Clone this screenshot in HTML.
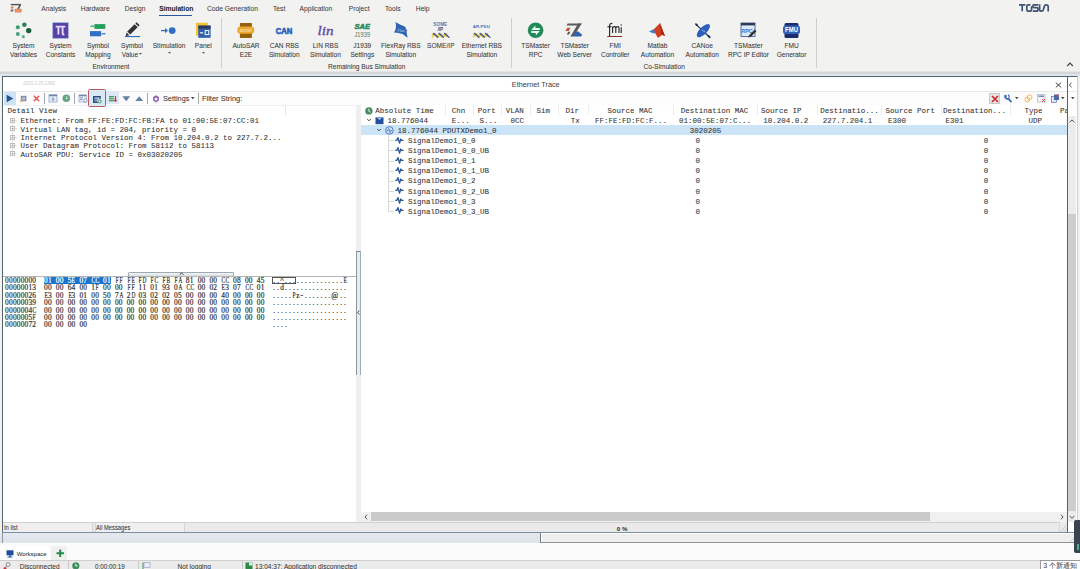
<!DOCTYPE html>
<html><head><meta charset="utf-8">
<style>
*{box-sizing:border-box;margin:0;padding:0}
html,body{width:1080px;height:569px;overflow:hidden;background:#f2f2f1}
body{position:relative;font-family:"Liberation Sans",sans-serif;color:#333}
.a{position:absolute;display:block}
.t{position:absolute;white-space:nowrap}
.s{-webkit-text-stroke:0.04px currentColor}
.m{-webkit-text-stroke:0.06px currentColor}
</style></head><body>

<div class="a" style="left:0px;top:0px;width:1080px;height:71px;background:#f2f2f1;"></div>
<svg class="a" style="left:10px;top:3px" width="12" height="10" viewBox="0 0 12 10"><rect x="0.7" y="0.9" width="10.3" height="1.4" fill="#555"/><path d="M10.4 1.6 L8 6.2" stroke="#555" stroke-width="1.6"/>
<path d="M1.2 3.6 H3.8 L2.9 5.6 H0.6Z" fill="#d8784a"/><path d="M1 6.4 H3.6 L3 8.4 H0.4Z" fill="#666"/>
<rect x="4.8" y="5.8" width="6.8" height="3.8" rx="0.8" fill="#dc8050"/><path d="M6.2 6.6 V8.8 M8 6.6 V8.8 M9.8 6.6 V8.8" stroke="#f8c8a8" stroke-width="0.6"/></svg>
<div class="t s" style="left:41.30px;top:5.63px;font:normal 6.7px/6.7px 'Liberation Sans',sans-serif;color:#3a3a3a;">Analysis</div>
<div class="t s" style="left:80.80px;top:5.63px;font:normal 6.7px/6.7px 'Liberation Sans',sans-serif;color:#3a3a3a;">Hardware</div>
<div class="t s" style="left:124.70px;top:5.63px;font:normal 6.7px/6.7px 'Liberation Sans',sans-serif;color:#3a3a3a;">Design</div>
<div class="t s" style="left:207.00px;top:5.63px;font:normal 6.7px/6.7px 'Liberation Sans',sans-serif;color:#3a3a3a;">Code Generation</div>
<div class="t s" style="left:273.00px;top:5.63px;font:normal 6.7px/6.7px 'Liberation Sans',sans-serif;color:#3a3a3a;">Test</div>
<div class="t s" style="left:299.50px;top:5.63px;font:normal 6.7px/6.7px 'Liberation Sans',sans-serif;color:#3a3a3a;">Application</div>
<div class="t s" style="left:348.70px;top:5.63px;font:normal 6.7px/6.7px 'Liberation Sans',sans-serif;color:#3a3a3a;">Project</div>
<div class="t s" style="left:385.00px;top:5.63px;font:normal 6.7px/6.7px 'Liberation Sans',sans-serif;color:#3a3a3a;">Tools</div>
<div class="t s" style="left:415.80px;top:5.63px;font:normal 6.7px/6.7px 'Liberation Sans',sans-serif;color:#3a3a3a;">Help</div>
<div class="t s" style="left:159.20px;top:5.63px;font:bold 6.7px/6.7px 'Liberation Sans',sans-serif;color:#222;">Simulation</div>
<div class="a" style="left:159px;top:14.5px;width:33px;height:1.6px;background:#2b579a;"></div>
<svg class="a" style="left:1018px;top:3px" width="33" height="9" viewBox="0 0 33 9"><g stroke="#3e5274" stroke-width="1.7" fill="none" stroke-linejoin="round">
<path d="M1 1.8 H7.4 M4.2 1.8 V8.2"/>
<path d="M12.4 1.8 H10.4 Q8.8 1.8 8.8 3.4 V6.6 Q8.8 8.2 10.4 8.2 H12 Q13.6 8.2 13.6 6.6 V3.2"/>
<path d="M20.2 1.8 H16 Q14.8 1.8 14.8 3.2 Q14.8 4.6 16 4.6 H18.8 Q20.2 4.6 20.2 6.2 Q20.2 8.2 18.6 8.2 H14.8"/>
<path d="M21.6 1.2 V6.4 Q21.6 8.2 23.4 8.2 Q25.4 8.2 25.6 6 L26.4 3 Q26.8 1.8 28 1.8 Q30.2 1.8 30.2 3.6 V8.6"/>
</g></svg>
<svg class="a" style="left:1066px;top:62px" width="8" height="5" viewBox="0 0 8 5"><path d="M1.2 4 L4 1.2 L6.8 4" stroke="#444" stroke-width="1.2" fill="none"/></svg>
<div class="a" style="left:221.2px;top:18px;width:1px;height:50px;background:#cfcfcf;"></div>
<div class="a" style="left:510.6px;top:18px;width:1px;height:50px;background:#cfcfcf;"></div>
<div class="a" style="left:816.2px;top:18px;width:1px;height:50px;background:#cfcfcf;"></div>
<div class="t s" style="left:-76.50px;width:200px;text-align:center;top:43.31px;font:normal 6.6px/6.6px 'Liberation Sans',sans-serif;color:#333;">System</div>
<div class="t s" style="left:-76.50px;width:200px;text-align:center;top:51.51px;font:normal 6.6px/6.6px 'Liberation Sans',sans-serif;color:#333;">Variables</div>
<div class="t s" style="left:-39.50px;width:200px;text-align:center;top:43.31px;font:normal 6.6px/6.6px 'Liberation Sans',sans-serif;color:#333;">System</div>
<div class="t s" style="left:-39.50px;width:200px;text-align:center;top:51.51px;font:normal 6.6px/6.6px 'Liberation Sans',sans-serif;color:#333;">Constants</div>
<div class="t s" style="left:-2.00px;width:200px;text-align:center;top:43.31px;font:normal 6.6px/6.6px 'Liberation Sans',sans-serif;color:#333;">Symbol</div>
<div class="t s" style="left:-2.00px;width:200px;text-align:center;top:51.51px;font:normal 6.6px/6.6px 'Liberation Sans',sans-serif;color:#333;">Mapping</div>
<div class="t s" style="left:32.00px;width:200px;text-align:center;top:43.31px;font:normal 6.6px/6.6px 'Liberation Sans',sans-serif;color:#333;">Symbol</div>
<div class="t s" style="left:30.00px;width:200px;text-align:center;top:51.51px;font:normal 6.6px/6.6px 'Liberation Sans',sans-serif;color:#333;">Value</div>
<svg class="a" style="left:139.2px;top:53.3px" width="3" height="2" viewBox="0 0 3 2"><path d="M0 0 H3 L1.5 1.8Z" fill="#555"/></svg>
<div class="t s" style="left:69.00px;width:200px;text-align:center;top:43.31px;font:normal 6.6px/6.6px 'Liberation Sans',sans-serif;color:#333;">Stimulation</div>
<svg class="a" style="left:167.5px;top:52.3px" width="3" height="2" viewBox="0 0 3 2"><path d="M0 0 H3 L1.5 1.8Z" fill="#555"/></svg>
<div class="t s" style="left:103.30px;width:200px;text-align:center;top:43.31px;font:normal 6.6px/6.6px 'Liberation Sans',sans-serif;color:#333;">Panel</div>
<svg class="a" style="left:201.8px;top:52.3px" width="3" height="2" viewBox="0 0 3 2"><path d="M0 0 H3 L1.5 1.8Z" fill="#555"/></svg>
<div class="t s" style="left:146.00px;width:200px;text-align:center;top:43.31px;font:normal 6.6px/6.6px 'Liberation Sans',sans-serif;color:#333;">AutoSAR</div>
<div class="t s" style="left:146.00px;width:200px;text-align:center;top:51.51px;font:normal 6.6px/6.6px 'Liberation Sans',sans-serif;color:#333;">E2E</div>
<div class="t s" style="left:184.30px;width:200px;text-align:center;top:43.31px;font:normal 6.6px/6.6px 'Liberation Sans',sans-serif;color:#333;">CAN RBS</div>
<div class="t s" style="left:184.30px;width:200px;text-align:center;top:51.51px;font:normal 6.6px/6.6px 'Liberation Sans',sans-serif;color:#333;">Simulation</div>
<div class="t s" style="left:225.50px;width:200px;text-align:center;top:43.31px;font:normal 6.6px/6.6px 'Liberation Sans',sans-serif;color:#333;">LIN RBS</div>
<div class="t s" style="left:225.50px;width:200px;text-align:center;top:51.51px;font:normal 6.6px/6.6px 'Liberation Sans',sans-serif;color:#333;">Simulation</div>
<div class="t s" style="left:262.30px;width:200px;text-align:center;top:43.31px;font:normal 6.6px/6.6px 'Liberation Sans',sans-serif;color:#333;">J1939</div>
<div class="t s" style="left:262.30px;width:200px;text-align:center;top:51.51px;font:normal 6.6px/6.6px 'Liberation Sans',sans-serif;color:#333;">Settings</div>
<div class="t s" style="left:300.80px;width:200px;text-align:center;top:43.31px;font:normal 6.6px/6.6px 'Liberation Sans',sans-serif;color:#333;">FlexRay RBS</div>
<div class="t s" style="left:300.80px;width:200px;text-align:center;top:51.51px;font:normal 6.6px/6.6px 'Liberation Sans',sans-serif;color:#333;">Simulation</div>
<div class="t s" style="left:340.80px;width:200px;text-align:center;top:43.31px;font:normal 6.6px/6.6px 'Liberation Sans',sans-serif;color:#333;">SOME/IP</div>
<div class="t s" style="left:381.80px;width:200px;text-align:center;top:43.31px;font:normal 6.6px/6.6px 'Liberation Sans',sans-serif;color:#333;">Ethernet RBS</div>
<div class="t s" style="left:381.80px;width:200px;text-align:center;top:51.51px;font:normal 6.6px/6.6px 'Liberation Sans',sans-serif;color:#333;">Simulation</div>
<div class="t s" style="left:435.60px;width:200px;text-align:center;top:43.31px;font:normal 6.6px/6.6px 'Liberation Sans',sans-serif;color:#333;">TSMaster</div>
<div class="t s" style="left:435.60px;width:200px;text-align:center;top:51.51px;font:normal 6.6px/6.6px 'Liberation Sans',sans-serif;color:#333;">RPC</div>
<div class="t s" style="left:474.70px;width:200px;text-align:center;top:43.31px;font:normal 6.6px/6.6px 'Liberation Sans',sans-serif;color:#333;">TSMaster</div>
<div class="t s" style="left:474.70px;width:200px;text-align:center;top:51.51px;font:normal 6.6px/6.6px 'Liberation Sans',sans-serif;color:#333;">Web Server</div>
<div class="t s" style="left:515.20px;width:200px;text-align:center;top:43.31px;font:normal 6.6px/6.6px 'Liberation Sans',sans-serif;color:#333;">FMI</div>
<div class="t s" style="left:515.20px;width:200px;text-align:center;top:51.51px;font:normal 6.6px/6.6px 'Liberation Sans',sans-serif;color:#333;">Controller</div>
<div class="t s" style="left:557.50px;width:200px;text-align:center;top:43.31px;font:normal 6.6px/6.6px 'Liberation Sans',sans-serif;color:#333;">Matlab</div>
<div class="t s" style="left:557.50px;width:200px;text-align:center;top:51.51px;font:normal 6.6px/6.6px 'Liberation Sans',sans-serif;color:#333;">Automation</div>
<div class="t s" style="left:602.20px;width:200px;text-align:center;top:43.31px;font:normal 6.6px/6.6px 'Liberation Sans',sans-serif;color:#333;">CANoe</div>
<div class="t s" style="left:602.20px;width:200px;text-align:center;top:51.51px;font:normal 6.6px/6.6px 'Liberation Sans',sans-serif;color:#333;">Automation</div>
<div class="t s" style="left:648.40px;width:200px;text-align:center;top:43.31px;font:normal 6.6px/6.6px 'Liberation Sans',sans-serif;color:#333;">TSMaster</div>
<div class="t s" style="left:648.40px;width:200px;text-align:center;top:51.51px;font:normal 6.6px/6.6px 'Liberation Sans',sans-serif;color:#333;">RPC IP Editor</div>
<div class="t s" style="left:691.60px;width:200px;text-align:center;top:43.31px;font:normal 6.6px/6.6px 'Liberation Sans',sans-serif;color:#333;">FMU</div>
<div class="t s" style="left:691.60px;width:200px;text-align:center;top:51.51px;font:normal 6.6px/6.6px 'Liberation Sans',sans-serif;color:#333;">Generator</div>
<div class="t s" style="left:10.90px;width:200px;text-align:center;top:63.91px;font:normal 6.6px/6.6px 'Liberation Sans',sans-serif;color:#333;">Environment</div>
<div class="t s" style="left:266.70px;width:200px;text-align:center;top:63.91px;font:normal 6.6px/6.6px 'Liberation Sans',sans-serif;color:#333;">Remaining Bus Simulation</div>
<div class="t s" style="left:564.20px;width:200px;text-align:center;top:63.91px;font:normal 6.6px/6.6px 'Liberation Sans',sans-serif;color:#333;">Co-Simulation</div>
<svg class="a" style="left:14px;top:21px" width="18" height="18" viewBox="0 0 18 18"><circle cx="3.8" cy="6.2" r="2" fill="#3a9a6a"/><circle cx="10.4" cy="3.8" r="2.3" fill="#2a8458"/>
<circle cx="14.7" cy="9.6" r="2.7" fill="#1b5e3c"/><circle cx="3.8" cy="12.9" r="2" fill="#4aa67a"/><circle cx="9.3" cy="15.7" r="1.6" fill="#5ab488"/></svg>
<svg class="a" style="left:52px;top:22px" width="17" height="17" viewBox="0 0 17 17"><rect x="1" y="1" width="15" height="15" fill="#5a3fa6" stroke="#3f5db8" stroke-width="0.8"/>
<path d="M3.6 4.6 H13.4 M6.4 4.6 V12.6 M10.6 4.6 V11.4 Q10.6 12.8 12.4 12.4" stroke="#e4dcf6" stroke-width="1.9" fill="none"/></svg>
<svg class="a" style="left:89px;top:23px" width="18" height="15" viewBox="0 0 18 15"><rect x="5.4" y="1.1" width="10.9" height="4.8" fill="#22a05a"/><rect x="1.5" y="2.6" width="3.5" height="1.2" fill="#22a05a"/>
<rect x="1" y="8.1" width="11.1" height="5.2" fill="#2f6fc6"/><rect x="12.5" y="10.2" width="4" height="1.2" fill="#2f6fc6"/></svg>
<svg class="a" style="left:124px;top:21px" width="17" height="17" viewBox="0 0 17 17"><path d="M3.2 10.6 L10.6 3.2 L13.6 6.2 L6.2 13.6 Z" fill="#333"/><path d="M11.4 2.4 L12.6 1.2 L15.6 4.2 L14.4 5.4Z" fill="#333"/>
<path d="M2.6 11.4 L5.4 14.2 L1.6 15.2Z" fill="#333"/><rect x="1" y="15" width="15" height="1.1" fill="#2f6fc6"/></svg>
<svg class="a" style="left:160px;top:25px" width="18" height="11" viewBox="0 0 18 11"><path d="M1 5.6 H6.5" stroke="#2f6fc6" stroke-width="1.3"/><path d="M5 3 L8 5.6 L5 8.2Z" fill="#2f6fc6"/><circle cx="12.2" cy="5.6" r="3.4" fill="#2f6fc6"/></svg>
<svg class="a" style="left:195px;top:22px" width="17" height="17" viewBox="0 0 17 17"><rect x="1" y="0.8" width="11.8" height="12.8" fill="#f2c230"/><rect x="3.3" y="3.6" width="12.3" height="12.2" fill="#2f5fb0"/>
<rect x="3.3" y="3.6" width="12.3" height="3" fill="#2c3a58"/><rect x="5" y="10.3" width="3.2" height="1.1" fill="#fff"/><rect x="10.2" y="8.6" width="3.6" height="4" fill="none" stroke="#fff" stroke-width="1"/></svg>
<svg class="a" style="left:236px;top:22px" width="19" height="17" viewBox="0 0 19 17"><rect x="3.9" y="1" width="12" height="15" rx="0.8" fill="#94600a"/><rect x="1.3" y="4.4" width="16.9" height="7.4" rx="3" fill="#eca82c"/>
<text x="9.7" y="9.8" text-anchor="middle" font-family="Liberation Sans" font-weight="bold" font-size="5" fill="#f8dca0" textLength="12" lengthAdjust="spacingAndGlyphs">arxml</text></svg>
<svg class="a" style="left:274px;top:26px" width="20" height="9" viewBox="0 0 20 9"><text x="10" y="7.8" text-anchor="middle" font-family="Liberation Sans" font-weight="bold" font-size="9" fill="#2a64c0" stroke="#2a64c0" stroke-width="0.7" textLength="16.6" lengthAdjust="spacingAndGlyphs">CAN</text></svg>
<svg class="a" style="left:316px;top:24px" width="19" height="13" viewBox="0 0 19 13"><text x="9.5" y="10.5" text-anchor="middle" font-family="Liberation Serif" font-style="italic" font-size="12" fill="#5a4aa8" stroke="#5a4aa8" stroke-width="0.3" textLength="16" lengthAdjust="spacingAndGlyphs">lin</text></svg>
<svg class="a" style="left:353px;top:23px" width="19" height="15" viewBox="0 0 19 15"><text x="9.3" y="6.4" text-anchor="middle" font-family="Liberation Sans" font-style="italic" font-weight="bold" font-size="7" fill="#2a8858" stroke="#2a8858" stroke-width="0.5" textLength="15.4" lengthAdjust="spacingAndGlyphs">SAE</text>
<text x="9.3" y="13.6" text-anchor="middle" font-family="Liberation Sans" font-size="6.4" fill="#5a7868" textLength="15.6" lengthAdjust="spacingAndGlyphs">J1939</text></svg>
<svg class="a" style="left:393px;top:21px" width="16" height="18" viewBox="0 0 16 18"><path d="M2.5 1 C6 3 9 4.5 12.5 6 L13 8.5 L14.5 9 L13.5 10.5 L14.6 16.8 L9.5 13 C7 12 4 12 1 11.5 C3 9 3.5 5 2.5 1Z" fill="#2f66b4"/>
<text x="8" y="10.5" text-anchor="middle" font-family="Liberation Serif" font-style="italic" font-size="4" fill="#cde">Flex</text></svg>
<svg class="a" style="left:430px;top:21px" width="21" height="18" viewBox="0 0 21 18"><text x="10.3" y="5.2" text-anchor="middle" font-family="Liberation Sans" font-weight="bold" font-size="4.8" fill="#5a78b0" textLength="14" lengthAdjust="spacingAndGlyphs">SOME</text>
<text x="10.3" y="9.6" text-anchor="middle" font-family="Liberation Sans" font-weight="bold" font-size="4.6" fill="#3a4a70">/IP</text>
<g transform="translate(0.5,11.2)"><path d="M1.5 2.6 Q4 1 6.5 4.4 Q9 1 11.5 4.4 Q14 1 16.5 4.4" stroke="#e8c848" stroke-width="2" fill="none"/><path d="M1.5 5 Q3.5 2.5 5.5 1.2 M7 5 Q9 2.5 11 1.2 M12.5 5 Q14.5 2.5 16.5 1.2" stroke="#e8c848" stroke-width="1.6" fill="none"/><path d="M3 1.2 Q5 2.6 7.5 5.2 M8.5 1.2 Q10.5 2.6 13 5.2 M14 1.2 Q16 2.6 18.5 5.2" stroke="#3a5a94" stroke-width="1.3" fill="none" stroke-linecap="round"/></g></svg>
<svg class="a" style="left:471px;top:23px" width="21" height="16" viewBox="0 0 21 16"><text x="10.3" y="5" text-anchor="middle" font-family="Liberation Sans" font-weight="bold" font-size="4.2" fill="#5070b0" textLength="17" lengthAdjust="spacingAndGlyphs">AR-PDU</text>
<g transform="translate(0.5,9.2)"><path d="M1.5 2.6 Q4 1 6.5 4.4 Q9 1 11.5 4.4 Q14 1 16.5 4.4" stroke="#e8c848" stroke-width="2" fill="none"/><path d="M1.5 5 Q3.5 2.5 5.5 1.2 M7 5 Q9 2.5 11 1.2 M12.5 5 Q14.5 2.5 16.5 1.2" stroke="#e8c848" stroke-width="1.6" fill="none"/><path d="M3 1.2 Q5 2.6 7.5 5.2 M8.5 1.2 Q10.5 2.6 13 5.2 M14 1.2 Q16 2.6 18.5 5.2" stroke="#3a5a94" stroke-width="1.3" fill="none" stroke-linecap="round"/></g></svg>
<svg class="a" style="left:527px;top:22px" width="17" height="17" viewBox="0 0 17 17"><circle cx="8.6" cy="8.3" r="7.8" fill="#218a58"/><path d="M4.2 8 L8.4 3.4 V6 H12.8 V8Z" fill="#e4fbef"/><path d="M12.8 9.1 L8.8 13.4 V10.9 H4.2 V9.1Z" fill="#e4fbef"/></svg>
<svg class="a" style="left:565px;top:23px" width="19" height="14" viewBox="0 0 19 14"><path d="M2.6 0.4 H16.6 L15.6 2.6 H1.6Z" fill="#5a5a5a"/><path d="M13.2 0.4 H16.6 L8.8 13.4 H5.4Z" fill="#5a5a5a"/>
<path d="M2.4 4.8 H5.6 L3.6 8 H0.4Z" fill="#c85030"/><path d="M3.2 8.8 H5.4 L4 11.4 H1.8Z" fill="#555"/>
<path d="M9.6 13.4 C8 13.4 7.8 10.8 10 10.6 C10.4 8 14.2 7.8 15 10.2 C17.4 10.2 17.6 13.4 15.4 13.4Z" fill="#2f62b0"/></svg>
<svg class="a" style="left:606px;top:22px" width="17" height="16" viewBox="0 0 17 16"><g stroke="#222" fill="none" stroke-width="1.1"><path d="M3.6 14 V3.6 Q3.6 1.2 6.4 1.2"/><path d="M1.4 4.8 H5.4"/>
<path d="M6.6 4.4 V11 M6.6 6 Q6.8 4.6 8.4 4.6 Q9.8 4.6 9.8 6 V11 M9.8 6 Q10 4.6 11.6 4.6 Q13 4.6 13 6 V11"/><path d="M15.2 5.2 V11"/></g>
<rect x="14.6" y="2.4" width="1.2" height="1.2" fill="#222"/><rect x="1.2" y="14" width="15" height="1" fill="#8a3030"/></svg>
<svg class="a" style="left:648px;top:22px" width="18" height="17" viewBox="0 0 18 17"><path d="M1 9.5 L6 7 L9 10 L5.5 11.5Z" fill="#3a7fd0"/><path d="M6 7 L12 1 L17 14 L14 13 L10 16 L7 11Z" fill="#d04020"/><path d="M12 1 L14.5 8 L17 14 L13 12Z" fill="#a82810"/></svg>
<svg class="a" style="left:693px;top:21px" width="19" height="18" viewBox="0 0 19 18"><path d="M3 3.4 L16.4 16" stroke="#1e2c52" stroke-width="1.1"/><ellipse cx="3.6" cy="3.8" rx="1.9" ry="1" transform="rotate(43 3.6 3.8)" fill="#1e2c52"/><ellipse cx="16" cy="15.6" rx="1.9" ry="1" transform="rotate(43 16 15.6)" fill="#1e2c52"/>
<ellipse cx="10.4" cy="9.6" rx="8.6" ry="3.6" transform="rotate(-45 10.4 9.6)" fill="#2c60bc"/>
<path d="M9.2 9.6 L10.2 8.6 M10.6 11 L11.6 10" stroke="#8ab8f0" stroke-width="1.1"/></svg>
<svg class="a" style="left:740px;top:22px" width="17" height="16" viewBox="0 0 17 16"><rect x="1" y="1" width="14" height="13.5" fill="#dbe8f8" stroke="#3a5080" stroke-width="0.8"/><rect x="1" y="1" width="14" height="2.4" fill="#2c3a58"/>
<text x="7" y="11" text-anchor="middle" font-family="Liberation Sans" font-weight="bold" font-size="5.5" fill="#4070c0">RPC</text><path d="M9.6 14.4 L15.6 8.4" stroke="#333" stroke-width="2.4"/><path d="M8.6 15.6 L9.8 14.2" stroke="#333" stroke-width="1"/></svg>
<svg class="a" style="left:782px;top:22px" width="19" height="17" viewBox="0 0 19 17"><rect x="2.5" y="1" width="14" height="15" rx="1.5" fill="#1a2e6a"/><rect x="1" y="3.5" width="17" height="8.5" rx="2.5" fill="#2f62b8"/>
<text x="9.5" y="10.4" text-anchor="middle" font-family="Liberation Sans" font-weight="bold" font-size="7" fill="#fff" textLength="13" lengthAdjust="spacingAndGlyphs">FMU</text></svg>
<div class="a" style="left:0px;top:70.5px;width:1080px;height:1px;background:#e6e5e5;"></div>
<div class="a" style="left:0px;top:71.5px;width:1080px;height:2px;background:#d6d6d6;"></div>
<div class="a" style="left:0px;top:73.5px;width:1080px;height:2.5px;background:#dde5ef;"></div>
<div class="a" style="left:2px;top:76px;width:1076px;height:457px;background:#fff;border:1px solid #55636f;border-right:1px solid #c4d0dc;border-bottom:1px solid #7d8ea4"></div>
<div class="a" style="left:3px;top:77px;width:1074px;height:14px;background:#fff;"></div>
<div class="a" style="left:3px;top:91px;width:1074px;height:0.8px;background:#e8e8e8;"></div>
<div class="t s" style="left:23.00px;top:82.11px;font:normal 4.6px/4.6px 'Liberation Sans',sans-serif;color:#cfcfcf;">2025.3.25.1360</div>
<div class="t s" style="left:511.80px;top:81.12px;font:normal 7.3px/7.3px 'Liberation Sans',sans-serif;color:#444;">Ethernet Trace</div>
<svg class="a" style="left:1055px;top:82px" width="7" height="6" viewBox="0 0 7 6"><path d="M0.8 0.6 L6.2 5.4 M6.2 0.6 L0.8 5.4" stroke="#444" stroke-width="1"/></svg>
<div class="a" style="left:3px;top:92px;width:1064px;height:13px;background:#fcfcfc;"></div>
<div class="a" style="left:3.7px;top:91.7px;width:12px;height:13px;background:#cde2f5;"></div>
<svg class="a" style="left:6px;top:94px" width="8" height="9" viewBox="0 0 8 9"><path d="M0.7 0.8 L7.3 4.4 L0.7 8.2Z" fill="#24528e"/></svg>
<svg class="a" style="left:20px;top:95px" width="7" height="7" viewBox="0 0 7 7"><rect x="0.8" y="0.8" width="5.6" height="5.4" fill="#8090ac"/><rect x="2.2" y="2.2" width="2.8" height="2.6" fill="#b8c4d4"/><rect x="0" y="5.4" width="2.6" height="1.6" fill="#eab070"/></svg>
<svg class="a" style="left:33px;top:95px" width="7" height="7" viewBox="0 0 7 7"><path d="M0.9 0.9 L6.1 6.1 M6.1 0.9 L0.9 6.1" stroke="#e06060" stroke-width="1.5"/></svg>
<div class="a" style="left:44.3px;top:93px;width:0.9px;height:11px;background:#a8a8a8;"></div>
<svg class="a" style="left:48px;top:94px" width="10" height="9" viewBox="0 0 10 9"><rect x="1" y="1" width="8" height="7" fill="#e8eef8" stroke="#90a4c8" stroke-width="0.8"/><rect x="1" y="0.6" width="8" height="1.6" fill="#6a82b0"/><path d="M5 3 V6.4 M3.5 5 L5 6.4 L6.5 5" stroke="#6a82b0" stroke-width="0.8" fill="none"/></svg>
<svg class="a" style="left:62px;top:94px" width="9" height="9" viewBox="0 0 9 9"><circle cx="4.3" cy="4.3" r="3.8" fill="#6aa383"/><path d="M4.3 2.2 V4.6 H6" stroke="#e8f4ec" stroke-width="0.8" fill="none"/></svg>
<div class="a" style="left:74.2px;top:93px;width:0.9px;height:11px;background:#a8a8a8;"></div>
<svg class="a" style="left:78px;top:94px" width="10" height="9" viewBox="0 0 10 9"><rect x="1" y="1" width="7.4" height="7" fill="#eef2f8" stroke="#98a8c8" stroke-width="0.8"/><rect x="1" y="0.8" width="7.4" height="1.5" fill="#7088b0"/><rect x="2" y="3.4" width="3" height="0.9" fill="#7088b0"/><rect x="2" y="5.2" width="2.5" height="0.9" fill="#7088b0"/><circle cx="7.4" cy="6.4" r="1.7" fill="#fff" stroke="#7088b0" stroke-width="0.8"/></svg>
<div class="a" style="left:106.4px;top:91.3px;width:13px;height:13px;background:#dce9f4;"></div>
<svg class="a" style="left:108px;top:95px" width="10" height="8" viewBox="0 0 10 8"><rect x="1" y="1" width="4.8" height="1.3" fill="#4a9660"/><rect x="1" y="3" width="4.8" height="1.3" fill="#4a9660"/><rect x="1" y="5" width="4.8" height="1.3" fill="#4a9660"/><rect x="6.8" y="1" width="1.3" height="4.5" fill="#a84858"/><circle cx="7.45" cy="5.6" r="1.2" fill="#b02840"/></svg>
<svg class="a" style="left:122px;top:95.5px" width="8.5" height="5.5" viewBox="0 0 8.5 5.5"><path d="M0.3 0.3 H8.2 L4.25 5.3Z" fill="#6480a6"/></svg>
<svg class="a" style="left:135.3px;top:96px" width="8.5" height="5.3" viewBox="0 0 8.5 5.3"><path d="M0.3 5 H8.2 L4.25 0.2Z" fill="#6480a6"/></svg>
<div class="a" style="left:147.3px;top:93px;width:0.9px;height:11px;background:#a8a8a8;"></div>
<svg class="a" style="left:152px;top:94.5px" width="8" height="8" viewBox="0 0 8 8"><path d="M4 0.3 L6.9 2 V5.6 L4 7.4 L1.1 5.6 V2Z" fill="#9060a8"/><circle cx="4" cy="3.9" r="1.5" fill="#f0e8f4"/></svg>
<div class="t s" style="left:163.00px;top:94.62px;font:normal 7.3px/7.3px 'Liberation Sans',sans-serif;color:#333;">Settings</div>
<svg class="a" style="left:190.5px;top:97px" width="4" height="3" viewBox="0 0 4 3"><path d="M0 0 H3.5 L1.75 2.2Z" fill="#444"/></svg>
<div class="a" style="left:197.8px;top:93px;width:0.9px;height:11px;background:#a8a8a8;"></div>
<div class="t s" style="left:201.90px;top:95.05px;font:normal 7.5px/7.5px 'Liberation Sans',sans-serif;color:#333;">Filter String:</div>
<div class="a" style="left:989px;top:93px;width:10.6px;height:10.5px;background:#e8e8e8;border:0.8px solid #c8c8c8"></div>
<svg class="a" style="left:990.5px;top:94.5px" width="8" height="8" viewBox="0 0 8 8"><path d="M1 1 L7 7 M7 1 L1 7" stroke="#d02828" stroke-width="1.7"/></svg>
<svg class="a" style="left:1004px;top:94px" width="8" height="9" viewBox="0 0 8 9"><path d="M1.2 1.6 A2.4 2.4 0 0 0 4.4 4.6 L7 7.6" stroke="#3a68b8" stroke-width="1.7" fill="none" stroke-linecap="round"/><path d="M1.4 1.2 L2.6 2.6 M3.8 0.8 A2.2 2.2 0 0 1 5 3.8" stroke="#3a68b8" stroke-width="1.2" fill="none"/></svg>
<svg class="a" style="left:1014.5px;top:97px" width="4" height="3" viewBox="0 0 4 3"><path d="M0 0 H3.5 L1.75 2.2Z" fill="#444"/></svg>
<svg class="a" style="left:1023.5px;top:94px" width="9" height="9" viewBox="0 0 9 9"><circle cx="3.2" cy="5.5" r="2.4" fill="none" stroke="#f0b860" stroke-width="1"/><circle cx="5.6" cy="3.2" r="2.4" fill="none" stroke="#f0b860" stroke-width="1"/></svg>
<svg class="a" style="left:1037px;top:94px" width="9" height="9" viewBox="0 0 9 9"><rect x="0.5" y="0.5" width="7.5" height="7.5" fill="#f4f6fa" stroke="#aab4c8" stroke-width="0.7"/><rect x="1.5" y="1.5" width="5.5" height="1.4" fill="#6b7fa8"/><path d="M5 5 L8 8 M8 5 L5 8" stroke="#e04040" stroke-width="0.9"/></svg>
<svg class="a" style="left:1050.5px;top:94px" width="9" height="9" viewBox="0 0 9 9"><rect x="0.5" y="2.5" width="5" height="6" fill="#dde6f4" stroke="#5a72a8" stroke-width="0.7"/><rect x="3" y="0.5" width="5" height="5.5" fill="#4a66a8"/><rect x="6" y="0.5" width="2" height="2" fill="#e05050"/></svg>
<svg class="a" style="left:1061px;top:97px" width="4" height="3" viewBox="0 0 4 3"><path d="M0 0 H3.5 L1.75 2.2Z" fill="#444"/></svg>
<div class="a" style="left:3px;top:105px;width:354px;height:417px;background:#fff;"></div>
<div class="a" style="left:3px;top:104.6px;width:1064px;height:0.8px;background:#f0f0f0;"></div>
<div class="a" style="left:285.4px;top:105px;width:0.8px;height:10.6px;background:#e6e6e6;"></div>
<div class="t m" style="left:7.60px;top:108.45px;font:normal 7.5px/7.5px 'Liberation Mono',monospace;color:#333;">Detail View</div>
<div class="a" style="left:12.2px;top:121px;width:0.8px;height:33px;background:#e2e2e2;"></div>
<svg class="a" style="left:10px;top:117.9px" width="7" height="6" viewBox="0 0 7 6"><rect x="0.5" y="0.5" width="4.2" height="4.2" fill="#fff" stroke="#aaa" stroke-width="0.7"/><path d="M1.4 2.6 H3.8 M2.6 1.4 V3.8" stroke="#888" stroke-width="0.6"/><path d="M4.8 2.6 H6.8" stroke="#bbb" stroke-width="0.6"/></svg>
<div class="t m" style="left:20.50px;top:118.35px;font:normal 7.5px/7.5px 'Liberation Mono',monospace;color:#333;">Ethernet: From FF:FE:FD:FC:FB:FA to 01:00:5E:07:CC:01</div>
<svg class="a" style="left:10px;top:126.25px" width="7" height="6" viewBox="0 0 7 6"><rect x="0.5" y="0.5" width="4.2" height="4.2" fill="#fff" stroke="#aaa" stroke-width="0.7"/><path d="M1.4 2.6 H3.8 M2.6 1.4 V3.8" stroke="#888" stroke-width="0.6"/><path d="M4.8 2.6 H6.8" stroke="#bbb" stroke-width="0.6"/></svg>
<div class="t m" style="left:20.50px;top:126.70px;font:normal 7.5px/7.5px 'Liberation Mono',monospace;color:#333;">Virtual LAN tag, id = 204, priority = 0</div>
<svg class="a" style="left:10px;top:134.6px" width="7" height="6" viewBox="0 0 7 6"><rect x="0.5" y="0.5" width="4.2" height="4.2" fill="#fff" stroke="#aaa" stroke-width="0.7"/><path d="M1.4 2.6 H3.8 M2.6 1.4 V3.8" stroke="#888" stroke-width="0.6"/><path d="M4.8 2.6 H6.8" stroke="#bbb" stroke-width="0.6"/></svg>
<div class="t m" style="left:20.50px;top:135.05px;font:normal 7.5px/7.5px 'Liberation Mono',monospace;color:#333;">Internet Protocol Version 4: From 10.204.0.2 to 227.7.2...</div>
<svg class="a" style="left:10px;top:142.95000000000002px" width="7" height="6" viewBox="0 0 7 6"><rect x="0.5" y="0.5" width="4.2" height="4.2" fill="#fff" stroke="#aaa" stroke-width="0.7"/><path d="M1.4 2.6 H3.8 M2.6 1.4 V3.8" stroke="#888" stroke-width="0.6"/><path d="M4.8 2.6 H6.8" stroke="#bbb" stroke-width="0.6"/></svg>
<div class="t m" style="left:20.50px;top:143.40px;font:normal 7.5px/7.5px 'Liberation Mono',monospace;color:#333;">User Datagram Protocol: From 58112 to 58113</div>
<svg class="a" style="left:10px;top:151.3px" width="7" height="6" viewBox="0 0 7 6"><rect x="0.5" y="0.5" width="4.2" height="4.2" fill="#fff" stroke="#aaa" stroke-width="0.7"/><path d="M1.4 2.6 H3.8 M2.6 1.4 V3.8" stroke="#888" stroke-width="0.6"/><path d="M4.8 2.6 H6.8" stroke="#bbb" stroke-width="0.6"/></svg>
<div class="t m" style="left:20.50px;top:151.75px;font:normal 7.5px/7.5px 'Liberation Mono',monospace;color:#333;">AutoSAR PDU: Service ID = 0x03020205</div>
<div class="a" style="left:3px;top:276px;width:354px;height:1px;background:#b4b4b4;"></div>
<div class="a" style="left:128.2px;top:272px;width:105.7px;height:4.2px;background:linear-gradient(#f4f6f8,#d4dde2);border:0.7px solid #a0a8b0;border-bottom:none;border-radius:1.5px 1.5px 0 0"></div>
<svg class="a" style="left:179px;top:272.4px" width="5" height="3.4" viewBox="0 0 5 3.4"><path d="M0.6 2.8 L2.5 0.9 L4.4 2.8" stroke="#333" stroke-width="1" fill="none"/></svg>
<div class="a" style="left:43.9px;top:277.2px;width:67.2px;height:6.8px;background:#1a74d0;"></div>
<div class="t" style="left:5.00px;top:277.10px;font:normal 7.4px/7.4px 'Liberation Serif',serif;color:#333;-webkit-text-stroke:0.2px #333"><span style="display:inline-block;width:3.9px;text-align:center">0</span><span style="display:inline-block;width:3.9px;text-align:center">0</span><span style="display:inline-block;width:3.9px;text-align:center">0</span><span style="display:inline-block;width:3.9px;text-align:center">0</span><span style="display:inline-block;width:3.9px;text-align:center">0</span><span style="display:inline-block;width:3.9px;text-align:center">0</span><span style="display:inline-block;width:3.9px;text-align:center">0</span><span style="display:inline-block;width:3.9px;text-align:center">0</span></div>
<div class="t" style="left:43.90px;top:277.10px;font:normal 7.4px/7.4px 'Liberation Serif',serif;color:#fff;-webkit-text-stroke:0.2px #fff"><span style="display:inline-block;width:3.9px;text-align:center">0</span><span style="display:inline-block;width:3.9px;text-align:center">1</span></div>
<div class="t" style="left:55.72px;top:277.10px;font:normal 7.4px/7.4px 'Liberation Serif',serif;color:#fff;-webkit-text-stroke:0.2px #fff"><span style="display:inline-block;width:3.9px;text-align:center">0</span><span style="display:inline-block;width:3.9px;text-align:center">0</span></div>
<div class="t" style="left:67.54px;top:277.10px;font:normal 7.4px/7.4px 'Liberation Serif',serif;color:#fff;-webkit-text-stroke:0.2px #fff"><span style="display:inline-block;width:3.9px;text-align:center">5</span><span style="display:inline-block;width:3.9px;text-align:center;transform:scaleX(0.74)">E</span></div>
<div class="t" style="left:79.36px;top:277.10px;font:normal 7.4px/7.4px 'Liberation Serif',serif;color:#fff;-webkit-text-stroke:0.2px #fff"><span style="display:inline-block;width:3.9px;text-align:center">0</span><span style="display:inline-block;width:3.9px;text-align:center">7</span></div>
<div class="t" style="left:91.18px;top:277.10px;font:normal 7.4px/7.4px 'Liberation Serif',serif;color:#fff;-webkit-text-stroke:0.2px #fff"><span style="display:inline-block;width:3.9px;text-align:center;transform:scaleX(0.74)">C</span><span style="display:inline-block;width:3.9px;text-align:center;transform:scaleX(0.74)">C</span></div>
<div class="t" style="left:103.00px;top:277.10px;font:normal 7.4px/7.4px 'Liberation Serif',serif;color:#fff;-webkit-text-stroke:0.2px #fff"><span style="display:inline-block;width:3.9px;text-align:center">0</span><span style="display:inline-block;width:3.9px;text-align:center">1</span></div>
<div class="t" style="left:114.82px;top:277.10px;font:normal 7.4px/7.4px 'Liberation Serif',serif;color:#333;-webkit-text-stroke:0.2px #333"><span style="display:inline-block;width:3.9px;text-align:center;transform:scaleX(0.74)">F</span><span style="display:inline-block;width:3.9px;text-align:center;transform:scaleX(0.74)">F</span></div>
<div class="t" style="left:126.64px;top:277.10px;font:normal 7.4px/7.4px 'Liberation Serif',serif;color:#333;-webkit-text-stroke:0.2px #333"><span style="display:inline-block;width:3.9px;text-align:center;transform:scaleX(0.74)">F</span><span style="display:inline-block;width:3.9px;text-align:center;transform:scaleX(0.74)">E</span></div>
<div class="t" style="left:138.46px;top:277.10px;font:normal 7.4px/7.4px 'Liberation Serif',serif;color:#333;-webkit-text-stroke:0.2px #333"><span style="display:inline-block;width:3.9px;text-align:center;transform:scaleX(0.74)">F</span><span style="display:inline-block;width:3.9px;text-align:center;transform:scaleX(0.74)">D</span></div>
<div class="t" style="left:150.28px;top:277.10px;font:normal 7.4px/7.4px 'Liberation Serif',serif;color:#333;-webkit-text-stroke:0.2px #333"><span style="display:inline-block;width:3.9px;text-align:center;transform:scaleX(0.74)">F</span><span style="display:inline-block;width:3.9px;text-align:center;transform:scaleX(0.74)">C</span></div>
<div class="t" style="left:162.10px;top:277.10px;font:normal 7.4px/7.4px 'Liberation Serif',serif;color:#333;-webkit-text-stroke:0.2px #333"><span style="display:inline-block;width:3.9px;text-align:center;transform:scaleX(0.74)">F</span><span style="display:inline-block;width:3.9px;text-align:center;transform:scaleX(0.74)">B</span></div>
<div class="t" style="left:173.92px;top:277.10px;font:normal 7.4px/7.4px 'Liberation Serif',serif;color:#333;-webkit-text-stroke:0.2px #333"><span style="display:inline-block;width:3.9px;text-align:center;transform:scaleX(0.74)">F</span><span style="display:inline-block;width:3.9px;text-align:center;transform:scaleX(0.74)">A</span></div>
<div class="t" style="left:185.74px;top:277.10px;font:normal 7.4px/7.4px 'Liberation Serif',serif;color:#333;-webkit-text-stroke:0.2px #333"><span style="display:inline-block;width:3.9px;text-align:center">8</span><span style="display:inline-block;width:3.9px;text-align:center">1</span></div>
<div class="t" style="left:197.56px;top:277.10px;font:normal 7.4px/7.4px 'Liberation Serif',serif;color:#333;-webkit-text-stroke:0.2px #333"><span style="display:inline-block;width:3.9px;text-align:center">0</span><span style="display:inline-block;width:3.9px;text-align:center">0</span></div>
<div class="t" style="left:209.38px;top:277.10px;font:normal 7.4px/7.4px 'Liberation Serif',serif;color:#333;-webkit-text-stroke:0.2px #333"><span style="display:inline-block;width:3.9px;text-align:center">0</span><span style="display:inline-block;width:3.9px;text-align:center">0</span></div>
<div class="t" style="left:221.20px;top:277.10px;font:normal 7.4px/7.4px 'Liberation Serif',serif;color:#333;-webkit-text-stroke:0.2px #333"><span style="display:inline-block;width:3.9px;text-align:center;transform:scaleX(0.74)">C</span><span style="display:inline-block;width:3.9px;text-align:center;transform:scaleX(0.74)">C</span></div>
<div class="t" style="left:233.02px;top:277.10px;font:normal 7.4px/7.4px 'Liberation Serif',serif;color:#333;-webkit-text-stroke:0.2px #333"><span style="display:inline-block;width:3.9px;text-align:center">0</span><span style="display:inline-block;width:3.9px;text-align:center">8</span></div>
<div class="t" style="left:244.84px;top:277.10px;font:normal 7.4px/7.4px 'Liberation Serif',serif;color:#333;-webkit-text-stroke:0.2px #333"><span style="display:inline-block;width:3.9px;text-align:center">0</span><span style="display:inline-block;width:3.9px;text-align:center">0</span></div>
<div class="t" style="left:256.66px;top:277.10px;font:normal 7.4px/7.4px 'Liberation Serif',serif;color:#333;-webkit-text-stroke:0.2px #333"><span style="display:inline-block;width:3.9px;text-align:center">4</span><span style="display:inline-block;width:3.9px;text-align:center">5</span></div>
<div class="t" style="left:272.20px;top:277.10px;font:normal 7.4px/7.4px 'Liberation Serif',serif;color:#333;-webkit-text-stroke:0.2px #333"><span style="display:inline-block;width:3.95px;text-align:center">.</span><span style="display:inline-block;width:3.95px;text-align:center">.</span><span style="display:inline-block;width:3.95px;text-align:center">^</span><span style="display:inline-block;width:3.95px;text-align:center">.</span><span style="display:inline-block;width:3.95px;text-align:center">.</span><span style="display:inline-block;width:3.95px;text-align:center">.</span><span style="display:inline-block;width:3.95px;text-align:center">.</span><span style="display:inline-block;width:3.95px;text-align:center">.</span><span style="display:inline-block;width:3.95px;text-align:center">.</span><span style="display:inline-block;width:3.95px;text-align:center">.</span><span style="display:inline-block;width:3.95px;text-align:center">.</span><span style="display:inline-block;width:3.95px;text-align:center">.</span><span style="display:inline-block;width:3.95px;text-align:center">.</span><span style="display:inline-block;width:3.95px;text-align:center">.</span><span style="display:inline-block;width:3.95px;text-align:center">.</span><span style="display:inline-block;width:3.95px;text-align:center">.</span><span style="display:inline-block;width:3.95px;text-align:center">.</span><span style="display:inline-block;width:3.95px;text-align:center">.</span><span style="display:inline-block;width:3.95px;text-align:center;transform:scaleX(0.74)">E</span></div>
<div class="t" style="left:5.00px;top:284.46px;font:normal 7.4px/7.4px 'Liberation Serif',serif;color:#333;-webkit-text-stroke:0.2px #333"><span style="display:inline-block;width:3.9px;text-align:center">0</span><span style="display:inline-block;width:3.9px;text-align:center">0</span><span style="display:inline-block;width:3.9px;text-align:center">0</span><span style="display:inline-block;width:3.9px;text-align:center">0</span><span style="display:inline-block;width:3.9px;text-align:center">0</span><span style="display:inline-block;width:3.9px;text-align:center">0</span><span style="display:inline-block;width:3.9px;text-align:center">1</span><span style="display:inline-block;width:3.9px;text-align:center">3</span></div>
<div class="t" style="left:43.90px;top:284.46px;font:normal 7.4px/7.4px 'Liberation Serif',serif;color:#333;-webkit-text-stroke:0.2px #333"><span style="display:inline-block;width:3.9px;text-align:center">0</span><span style="display:inline-block;width:3.9px;text-align:center">0</span></div>
<div class="t" style="left:55.72px;top:284.46px;font:normal 7.4px/7.4px 'Liberation Serif',serif;color:#333;-webkit-text-stroke:0.2px #333"><span style="display:inline-block;width:3.9px;text-align:center">0</span><span style="display:inline-block;width:3.9px;text-align:center">0</span></div>
<div class="t" style="left:67.54px;top:284.46px;font:normal 7.4px/7.4px 'Liberation Serif',serif;color:#333;-webkit-text-stroke:0.2px #333"><span style="display:inline-block;width:3.9px;text-align:center">6</span><span style="display:inline-block;width:3.9px;text-align:center">4</span></div>
<div class="t" style="left:79.36px;top:284.46px;font:normal 7.4px/7.4px 'Liberation Serif',serif;color:#333;-webkit-text-stroke:0.2px #333"><span style="display:inline-block;width:3.9px;text-align:center">0</span><span style="display:inline-block;width:3.9px;text-align:center">0</span></div>
<div class="t" style="left:91.18px;top:284.46px;font:normal 7.4px/7.4px 'Liberation Serif',serif;color:#333;-webkit-text-stroke:0.2px #333"><span style="display:inline-block;width:3.9px;text-align:center">1</span><span style="display:inline-block;width:3.9px;text-align:center;transform:scaleX(0.74)">F</span></div>
<div class="t" style="left:103.00px;top:284.46px;font:normal 7.4px/7.4px 'Liberation Serif',serif;color:#333;-webkit-text-stroke:0.2px #333"><span style="display:inline-block;width:3.9px;text-align:center">0</span><span style="display:inline-block;width:3.9px;text-align:center">0</span></div>
<div class="t" style="left:114.82px;top:284.46px;font:normal 7.4px/7.4px 'Liberation Serif',serif;color:#333;-webkit-text-stroke:0.2px #333"><span style="display:inline-block;width:3.9px;text-align:center">0</span><span style="display:inline-block;width:3.9px;text-align:center">0</span></div>
<div class="t" style="left:126.64px;top:284.46px;font:normal 7.4px/7.4px 'Liberation Serif',serif;color:#333;-webkit-text-stroke:0.2px #333"><span style="display:inline-block;width:3.9px;text-align:center;transform:scaleX(0.74)">F</span><span style="display:inline-block;width:3.9px;text-align:center;transform:scaleX(0.74)">F</span></div>
<div class="t" style="left:138.46px;top:284.46px;font:normal 7.4px/7.4px 'Liberation Serif',serif;color:#333;-webkit-text-stroke:0.2px #333"><span style="display:inline-block;width:3.9px;text-align:center">1</span><span style="display:inline-block;width:3.9px;text-align:center">1</span></div>
<div class="t" style="left:150.28px;top:284.46px;font:normal 7.4px/7.4px 'Liberation Serif',serif;color:#333;-webkit-text-stroke:0.2px #333"><span style="display:inline-block;width:3.9px;text-align:center">0</span><span style="display:inline-block;width:3.9px;text-align:center">1</span></div>
<div class="t" style="left:162.10px;top:284.46px;font:normal 7.4px/7.4px 'Liberation Serif',serif;color:#333;-webkit-text-stroke:0.2px #333"><span style="display:inline-block;width:3.9px;text-align:center">9</span><span style="display:inline-block;width:3.9px;text-align:center">3</span></div>
<div class="t" style="left:173.92px;top:284.46px;font:normal 7.4px/7.4px 'Liberation Serif',serif;color:#333;-webkit-text-stroke:0.2px #333"><span style="display:inline-block;width:3.9px;text-align:center">0</span><span style="display:inline-block;width:3.9px;text-align:center;transform:scaleX(0.74)">A</span></div>
<div class="t" style="left:185.74px;top:284.46px;font:normal 7.4px/7.4px 'Liberation Serif',serif;color:#333;-webkit-text-stroke:0.2px #333"><span style="display:inline-block;width:3.9px;text-align:center;transform:scaleX(0.74)">C</span><span style="display:inline-block;width:3.9px;text-align:center;transform:scaleX(0.74)">C</span></div>
<div class="t" style="left:197.56px;top:284.46px;font:normal 7.4px/7.4px 'Liberation Serif',serif;color:#333;-webkit-text-stroke:0.2px #333"><span style="display:inline-block;width:3.9px;text-align:center">0</span><span style="display:inline-block;width:3.9px;text-align:center">0</span></div>
<div class="t" style="left:209.38px;top:284.46px;font:normal 7.4px/7.4px 'Liberation Serif',serif;color:#333;-webkit-text-stroke:0.2px #333"><span style="display:inline-block;width:3.9px;text-align:center">0</span><span style="display:inline-block;width:3.9px;text-align:center">2</span></div>
<div class="t" style="left:221.20px;top:284.46px;font:normal 7.4px/7.4px 'Liberation Serif',serif;color:#333;-webkit-text-stroke:0.2px #333"><span style="display:inline-block;width:3.9px;text-align:center;transform:scaleX(0.74)">E</span><span style="display:inline-block;width:3.9px;text-align:center">3</span></div>
<div class="t" style="left:233.02px;top:284.46px;font:normal 7.4px/7.4px 'Liberation Serif',serif;color:#333;-webkit-text-stroke:0.2px #333"><span style="display:inline-block;width:3.9px;text-align:center">0</span><span style="display:inline-block;width:3.9px;text-align:center">7</span></div>
<div class="t" style="left:244.84px;top:284.46px;font:normal 7.4px/7.4px 'Liberation Serif',serif;color:#333;-webkit-text-stroke:0.2px #333"><span style="display:inline-block;width:3.9px;text-align:center;transform:scaleX(0.74)">C</span><span style="display:inline-block;width:3.9px;text-align:center;transform:scaleX(0.74)">C</span></div>
<div class="t" style="left:256.66px;top:284.46px;font:normal 7.4px/7.4px 'Liberation Serif',serif;color:#333;-webkit-text-stroke:0.2px #333"><span style="display:inline-block;width:3.9px;text-align:center">0</span><span style="display:inline-block;width:3.9px;text-align:center">1</span></div>
<div class="t" style="left:272.20px;top:284.46px;font:normal 7.4px/7.4px 'Liberation Serif',serif;color:#333;-webkit-text-stroke:0.2px #333"><span style="display:inline-block;width:3.95px;text-align:center">.</span><span style="display:inline-block;width:3.95px;text-align:center">.</span><span style="display:inline-block;width:3.95px;text-align:center">d</span><span style="display:inline-block;width:3.95px;text-align:center">.</span><span style="display:inline-block;width:3.95px;text-align:center">.</span><span style="display:inline-block;width:3.95px;text-align:center">.</span><span style="display:inline-block;width:3.95px;text-align:center">.</span><span style="display:inline-block;width:3.95px;text-align:center">.</span><span style="display:inline-block;width:3.95px;text-align:center">.</span><span style="display:inline-block;width:3.95px;text-align:center">.</span><span style="display:inline-block;width:3.95px;text-align:center">.</span><span style="display:inline-block;width:3.95px;text-align:center">.</span><span style="display:inline-block;width:3.95px;text-align:center">.</span><span style="display:inline-block;width:3.95px;text-align:center">.</span><span style="display:inline-block;width:3.95px;text-align:center">.</span><span style="display:inline-block;width:3.95px;text-align:center">.</span><span style="display:inline-block;width:3.95px;text-align:center">.</span><span style="display:inline-block;width:3.95px;text-align:center">.</span><span style="display:inline-block;width:3.95px;text-align:center">.</span></div>
<div class="t" style="left:5.00px;top:291.82px;font:normal 7.4px/7.4px 'Liberation Serif',serif;color:#333;-webkit-text-stroke:0.2px #333"><span style="display:inline-block;width:3.9px;text-align:center">0</span><span style="display:inline-block;width:3.9px;text-align:center">0</span><span style="display:inline-block;width:3.9px;text-align:center">0</span><span style="display:inline-block;width:3.9px;text-align:center">0</span><span style="display:inline-block;width:3.9px;text-align:center">0</span><span style="display:inline-block;width:3.9px;text-align:center">0</span><span style="display:inline-block;width:3.9px;text-align:center">2</span><span style="display:inline-block;width:3.9px;text-align:center">6</span></div>
<div class="t" style="left:43.90px;top:291.82px;font:normal 7.4px/7.4px 'Liberation Serif',serif;color:#333;-webkit-text-stroke:0.2px #333"><span style="display:inline-block;width:3.9px;text-align:center;transform:scaleX(0.74)">E</span><span style="display:inline-block;width:3.9px;text-align:center">3</span></div>
<div class="t" style="left:55.72px;top:291.82px;font:normal 7.4px/7.4px 'Liberation Serif',serif;color:#333;-webkit-text-stroke:0.2px #333"><span style="display:inline-block;width:3.9px;text-align:center">0</span><span style="display:inline-block;width:3.9px;text-align:center">0</span></div>
<div class="t" style="left:67.54px;top:291.82px;font:normal 7.4px/7.4px 'Liberation Serif',serif;color:#333;-webkit-text-stroke:0.2px #333"><span style="display:inline-block;width:3.9px;text-align:center;transform:scaleX(0.74)">E</span><span style="display:inline-block;width:3.9px;text-align:center">3</span></div>
<div class="t" style="left:79.36px;top:291.82px;font:normal 7.4px/7.4px 'Liberation Serif',serif;color:#333;-webkit-text-stroke:0.2px #333"><span style="display:inline-block;width:3.9px;text-align:center">0</span><span style="display:inline-block;width:3.9px;text-align:center">1</span></div>
<div class="t" style="left:91.18px;top:291.82px;font:normal 7.4px/7.4px 'Liberation Serif',serif;color:#333;-webkit-text-stroke:0.2px #333"><span style="display:inline-block;width:3.9px;text-align:center">0</span><span style="display:inline-block;width:3.9px;text-align:center">0</span></div>
<div class="t" style="left:103.00px;top:291.82px;font:normal 7.4px/7.4px 'Liberation Serif',serif;color:#333;-webkit-text-stroke:0.2px #333"><span style="display:inline-block;width:3.9px;text-align:center">5</span><span style="display:inline-block;width:3.9px;text-align:center">0</span></div>
<div class="t" style="left:114.82px;top:291.82px;font:normal 7.4px/7.4px 'Liberation Serif',serif;color:#333;-webkit-text-stroke:0.2px #333"><span style="display:inline-block;width:3.9px;text-align:center">7</span><span style="display:inline-block;width:3.9px;text-align:center;transform:scaleX(0.74)">A</span></div>
<div class="t" style="left:126.64px;top:291.82px;font:normal 7.4px/7.4px 'Liberation Serif',serif;color:#333;-webkit-text-stroke:0.2px #333"><span style="display:inline-block;width:3.9px;text-align:center">2</span><span style="display:inline-block;width:3.9px;text-align:center;transform:scaleX(0.74)">D</span></div>
<div class="t" style="left:138.46px;top:291.82px;font:normal 7.4px/7.4px 'Liberation Serif',serif;color:#333;-webkit-text-stroke:0.2px #333"><span style="display:inline-block;width:3.9px;text-align:center">0</span><span style="display:inline-block;width:3.9px;text-align:center">3</span></div>
<div class="t" style="left:150.28px;top:291.82px;font:normal 7.4px/7.4px 'Liberation Serif',serif;color:#333;-webkit-text-stroke:0.2px #333"><span style="display:inline-block;width:3.9px;text-align:center">0</span><span style="display:inline-block;width:3.9px;text-align:center">2</span></div>
<div class="t" style="left:162.10px;top:291.82px;font:normal 7.4px/7.4px 'Liberation Serif',serif;color:#333;-webkit-text-stroke:0.2px #333"><span style="display:inline-block;width:3.9px;text-align:center">0</span><span style="display:inline-block;width:3.9px;text-align:center">2</span></div>
<div class="t" style="left:173.92px;top:291.82px;font:normal 7.4px/7.4px 'Liberation Serif',serif;color:#333;-webkit-text-stroke:0.2px #333"><span style="display:inline-block;width:3.9px;text-align:center">0</span><span style="display:inline-block;width:3.9px;text-align:center">5</span></div>
<div class="t" style="left:185.74px;top:291.82px;font:normal 7.4px/7.4px 'Liberation Serif',serif;color:#333;-webkit-text-stroke:0.2px #333"><span style="display:inline-block;width:3.9px;text-align:center">0</span><span style="display:inline-block;width:3.9px;text-align:center">0</span></div>
<div class="t" style="left:197.56px;top:291.82px;font:normal 7.4px/7.4px 'Liberation Serif',serif;color:#333;-webkit-text-stroke:0.2px #333"><span style="display:inline-block;width:3.9px;text-align:center">0</span><span style="display:inline-block;width:3.9px;text-align:center">0</span></div>
<div class="t" style="left:209.38px;top:291.82px;font:normal 7.4px/7.4px 'Liberation Serif',serif;color:#333;-webkit-text-stroke:0.2px #333"><span style="display:inline-block;width:3.9px;text-align:center">0</span><span style="display:inline-block;width:3.9px;text-align:center">0</span></div>
<div class="t" style="left:221.20px;top:291.82px;font:normal 7.4px/7.4px 'Liberation Serif',serif;color:#333;-webkit-text-stroke:0.2px #333"><span style="display:inline-block;width:3.9px;text-align:center">4</span><span style="display:inline-block;width:3.9px;text-align:center">0</span></div>
<div class="t" style="left:233.02px;top:291.82px;font:normal 7.4px/7.4px 'Liberation Serif',serif;color:#333;-webkit-text-stroke:0.2px #333"><span style="display:inline-block;width:3.9px;text-align:center">0</span><span style="display:inline-block;width:3.9px;text-align:center">0</span></div>
<div class="t" style="left:244.84px;top:291.82px;font:normal 7.4px/7.4px 'Liberation Serif',serif;color:#333;-webkit-text-stroke:0.2px #333"><span style="display:inline-block;width:3.9px;text-align:center">0</span><span style="display:inline-block;width:3.9px;text-align:center">0</span></div>
<div class="t" style="left:256.66px;top:291.82px;font:normal 7.4px/7.4px 'Liberation Serif',serif;color:#333;-webkit-text-stroke:0.2px #333"><span style="display:inline-block;width:3.9px;text-align:center">0</span><span style="display:inline-block;width:3.9px;text-align:center">0</span></div>
<div class="t" style="left:272.20px;top:291.82px;font:normal 7.4px/7.4px 'Liberation Serif',serif;color:#333;-webkit-text-stroke:0.2px #333"><span style="display:inline-block;width:3.95px;text-align:center">.</span><span style="display:inline-block;width:3.95px;text-align:center">.</span><span style="display:inline-block;width:3.95px;text-align:center">.</span><span style="display:inline-block;width:3.95px;text-align:center">.</span><span style="display:inline-block;width:3.95px;text-align:center">.</span><span style="display:inline-block;width:3.95px;text-align:center;transform:scaleX(0.74)">P</span><span style="display:inline-block;width:3.95px;text-align:center">z</span><span style="display:inline-block;width:3.95px;text-align:center">-</span><span style="display:inline-block;width:3.95px;text-align:center">.</span><span style="display:inline-block;width:3.95px;text-align:center">.</span><span style="display:inline-block;width:3.95px;text-align:center">.</span><span style="display:inline-block;width:3.95px;text-align:center">.</span><span style="display:inline-block;width:3.95px;text-align:center">.</span><span style="display:inline-block;width:3.95px;text-align:center">.</span><span style="display:inline-block;width:3.95px;text-align:center">.</span><span style="display:inline-block;width:3.95px;text-align:center">@</span><span style="display:inline-block;width:3.95px;text-align:center">.</span><span style="display:inline-block;width:3.95px;text-align:center">.</span><span style="display:inline-block;width:3.95px;text-align:center">.</span></div>
<div class="t" style="left:5.00px;top:299.18px;font:normal 7.4px/7.4px 'Liberation Serif',serif;color:#333;-webkit-text-stroke:0.2px #333"><span style="display:inline-block;width:3.9px;text-align:center">0</span><span style="display:inline-block;width:3.9px;text-align:center">0</span><span style="display:inline-block;width:3.9px;text-align:center">0</span><span style="display:inline-block;width:3.9px;text-align:center">0</span><span style="display:inline-block;width:3.9px;text-align:center">0</span><span style="display:inline-block;width:3.9px;text-align:center">0</span><span style="display:inline-block;width:3.9px;text-align:center">3</span><span style="display:inline-block;width:3.9px;text-align:center">9</span></div>
<div class="t" style="left:43.90px;top:299.18px;font:normal 7.4px/7.4px 'Liberation Serif',serif;color:#333;-webkit-text-stroke:0.2px #333"><span style="display:inline-block;width:3.9px;text-align:center">0</span><span style="display:inline-block;width:3.9px;text-align:center">0</span></div>
<div class="t" style="left:55.72px;top:299.18px;font:normal 7.4px/7.4px 'Liberation Serif',serif;color:#333;-webkit-text-stroke:0.2px #333"><span style="display:inline-block;width:3.9px;text-align:center">0</span><span style="display:inline-block;width:3.9px;text-align:center">0</span></div>
<div class="t" style="left:67.54px;top:299.18px;font:normal 7.4px/7.4px 'Liberation Serif',serif;color:#333;-webkit-text-stroke:0.2px #333"><span style="display:inline-block;width:3.9px;text-align:center">0</span><span style="display:inline-block;width:3.9px;text-align:center">0</span></div>
<div class="t" style="left:79.36px;top:299.18px;font:normal 7.4px/7.4px 'Liberation Serif',serif;color:#333;-webkit-text-stroke:0.2px #333"><span style="display:inline-block;width:3.9px;text-align:center">0</span><span style="display:inline-block;width:3.9px;text-align:center">0</span></div>
<div class="t" style="left:91.18px;top:299.18px;font:normal 7.4px/7.4px 'Liberation Serif',serif;color:#333;-webkit-text-stroke:0.2px #333"><span style="display:inline-block;width:3.9px;text-align:center">0</span><span style="display:inline-block;width:3.9px;text-align:center">0</span></div>
<div class="t" style="left:103.00px;top:299.18px;font:normal 7.4px/7.4px 'Liberation Serif',serif;color:#333;-webkit-text-stroke:0.2px #333"><span style="display:inline-block;width:3.9px;text-align:center">0</span><span style="display:inline-block;width:3.9px;text-align:center">0</span></div>
<div class="t" style="left:114.82px;top:299.18px;font:normal 7.4px/7.4px 'Liberation Serif',serif;color:#333;-webkit-text-stroke:0.2px #333"><span style="display:inline-block;width:3.9px;text-align:center">0</span><span style="display:inline-block;width:3.9px;text-align:center">0</span></div>
<div class="t" style="left:126.64px;top:299.18px;font:normal 7.4px/7.4px 'Liberation Serif',serif;color:#333;-webkit-text-stroke:0.2px #333"><span style="display:inline-block;width:3.9px;text-align:center">0</span><span style="display:inline-block;width:3.9px;text-align:center">0</span></div>
<div class="t" style="left:138.46px;top:299.18px;font:normal 7.4px/7.4px 'Liberation Serif',serif;color:#333;-webkit-text-stroke:0.2px #333"><span style="display:inline-block;width:3.9px;text-align:center">0</span><span style="display:inline-block;width:3.9px;text-align:center">0</span></div>
<div class="t" style="left:150.28px;top:299.18px;font:normal 7.4px/7.4px 'Liberation Serif',serif;color:#333;-webkit-text-stroke:0.2px #333"><span style="display:inline-block;width:3.9px;text-align:center">0</span><span style="display:inline-block;width:3.9px;text-align:center">0</span></div>
<div class="t" style="left:162.10px;top:299.18px;font:normal 7.4px/7.4px 'Liberation Serif',serif;color:#333;-webkit-text-stroke:0.2px #333"><span style="display:inline-block;width:3.9px;text-align:center">0</span><span style="display:inline-block;width:3.9px;text-align:center">0</span></div>
<div class="t" style="left:173.92px;top:299.18px;font:normal 7.4px/7.4px 'Liberation Serif',serif;color:#333;-webkit-text-stroke:0.2px #333"><span style="display:inline-block;width:3.9px;text-align:center">0</span><span style="display:inline-block;width:3.9px;text-align:center">0</span></div>
<div class="t" style="left:185.74px;top:299.18px;font:normal 7.4px/7.4px 'Liberation Serif',serif;color:#333;-webkit-text-stroke:0.2px #333"><span style="display:inline-block;width:3.9px;text-align:center">0</span><span style="display:inline-block;width:3.9px;text-align:center">0</span></div>
<div class="t" style="left:197.56px;top:299.18px;font:normal 7.4px/7.4px 'Liberation Serif',serif;color:#333;-webkit-text-stroke:0.2px #333"><span style="display:inline-block;width:3.9px;text-align:center">0</span><span style="display:inline-block;width:3.9px;text-align:center">0</span></div>
<div class="t" style="left:209.38px;top:299.18px;font:normal 7.4px/7.4px 'Liberation Serif',serif;color:#333;-webkit-text-stroke:0.2px #333"><span style="display:inline-block;width:3.9px;text-align:center">0</span><span style="display:inline-block;width:3.9px;text-align:center">0</span></div>
<div class="t" style="left:221.20px;top:299.18px;font:normal 7.4px/7.4px 'Liberation Serif',serif;color:#333;-webkit-text-stroke:0.2px #333"><span style="display:inline-block;width:3.9px;text-align:center">0</span><span style="display:inline-block;width:3.9px;text-align:center">0</span></div>
<div class="t" style="left:233.02px;top:299.18px;font:normal 7.4px/7.4px 'Liberation Serif',serif;color:#333;-webkit-text-stroke:0.2px #333"><span style="display:inline-block;width:3.9px;text-align:center">0</span><span style="display:inline-block;width:3.9px;text-align:center">0</span></div>
<div class="t" style="left:244.84px;top:299.18px;font:normal 7.4px/7.4px 'Liberation Serif',serif;color:#333;-webkit-text-stroke:0.2px #333"><span style="display:inline-block;width:3.9px;text-align:center">0</span><span style="display:inline-block;width:3.9px;text-align:center">0</span></div>
<div class="t" style="left:256.66px;top:299.18px;font:normal 7.4px/7.4px 'Liberation Serif',serif;color:#333;-webkit-text-stroke:0.2px #333"><span style="display:inline-block;width:3.9px;text-align:center">0</span><span style="display:inline-block;width:3.9px;text-align:center">0</span></div>
<div class="t" style="left:272.20px;top:299.18px;font:normal 7.4px/7.4px 'Liberation Serif',serif;color:#333;-webkit-text-stroke:0.2px #333"><span style="display:inline-block;width:3.95px;text-align:center">.</span><span style="display:inline-block;width:3.95px;text-align:center">.</span><span style="display:inline-block;width:3.95px;text-align:center">.</span><span style="display:inline-block;width:3.95px;text-align:center">.</span><span style="display:inline-block;width:3.95px;text-align:center">.</span><span style="display:inline-block;width:3.95px;text-align:center">.</span><span style="display:inline-block;width:3.95px;text-align:center">.</span><span style="display:inline-block;width:3.95px;text-align:center">.</span><span style="display:inline-block;width:3.95px;text-align:center">.</span><span style="display:inline-block;width:3.95px;text-align:center">.</span><span style="display:inline-block;width:3.95px;text-align:center">.</span><span style="display:inline-block;width:3.95px;text-align:center">.</span><span style="display:inline-block;width:3.95px;text-align:center">.</span><span style="display:inline-block;width:3.95px;text-align:center">.</span><span style="display:inline-block;width:3.95px;text-align:center">.</span><span style="display:inline-block;width:3.95px;text-align:center">.</span><span style="display:inline-block;width:3.95px;text-align:center">.</span><span style="display:inline-block;width:3.95px;text-align:center">.</span><span style="display:inline-block;width:3.95px;text-align:center">.</span></div>
<div class="t" style="left:5.00px;top:306.54px;font:normal 7.4px/7.4px 'Liberation Serif',serif;color:#333;-webkit-text-stroke:0.2px #333"><span style="display:inline-block;width:3.9px;text-align:center">0</span><span style="display:inline-block;width:3.9px;text-align:center">0</span><span style="display:inline-block;width:3.9px;text-align:center">0</span><span style="display:inline-block;width:3.9px;text-align:center">0</span><span style="display:inline-block;width:3.9px;text-align:center">0</span><span style="display:inline-block;width:3.9px;text-align:center">0</span><span style="display:inline-block;width:3.9px;text-align:center">4</span><span style="display:inline-block;width:3.9px;text-align:center;transform:scaleX(0.74)">C</span></div>
<div class="t" style="left:43.90px;top:306.54px;font:normal 7.4px/7.4px 'Liberation Serif',serif;color:#333;-webkit-text-stroke:0.2px #333"><span style="display:inline-block;width:3.9px;text-align:center">0</span><span style="display:inline-block;width:3.9px;text-align:center">0</span></div>
<div class="t" style="left:55.72px;top:306.54px;font:normal 7.4px/7.4px 'Liberation Serif',serif;color:#333;-webkit-text-stroke:0.2px #333"><span style="display:inline-block;width:3.9px;text-align:center">0</span><span style="display:inline-block;width:3.9px;text-align:center">0</span></div>
<div class="t" style="left:67.54px;top:306.54px;font:normal 7.4px/7.4px 'Liberation Serif',serif;color:#333;-webkit-text-stroke:0.2px #333"><span style="display:inline-block;width:3.9px;text-align:center">0</span><span style="display:inline-block;width:3.9px;text-align:center">0</span></div>
<div class="t" style="left:79.36px;top:306.54px;font:normal 7.4px/7.4px 'Liberation Serif',serif;color:#333;-webkit-text-stroke:0.2px #333"><span style="display:inline-block;width:3.9px;text-align:center">0</span><span style="display:inline-block;width:3.9px;text-align:center">0</span></div>
<div class="t" style="left:91.18px;top:306.54px;font:normal 7.4px/7.4px 'Liberation Serif',serif;color:#333;-webkit-text-stroke:0.2px #333"><span style="display:inline-block;width:3.9px;text-align:center">0</span><span style="display:inline-block;width:3.9px;text-align:center">0</span></div>
<div class="t" style="left:103.00px;top:306.54px;font:normal 7.4px/7.4px 'Liberation Serif',serif;color:#333;-webkit-text-stroke:0.2px #333"><span style="display:inline-block;width:3.9px;text-align:center">0</span><span style="display:inline-block;width:3.9px;text-align:center">0</span></div>
<div class="t" style="left:114.82px;top:306.54px;font:normal 7.4px/7.4px 'Liberation Serif',serif;color:#333;-webkit-text-stroke:0.2px #333"><span style="display:inline-block;width:3.9px;text-align:center">0</span><span style="display:inline-block;width:3.9px;text-align:center">0</span></div>
<div class="t" style="left:126.64px;top:306.54px;font:normal 7.4px/7.4px 'Liberation Serif',serif;color:#333;-webkit-text-stroke:0.2px #333"><span style="display:inline-block;width:3.9px;text-align:center">0</span><span style="display:inline-block;width:3.9px;text-align:center">0</span></div>
<div class="t" style="left:138.46px;top:306.54px;font:normal 7.4px/7.4px 'Liberation Serif',serif;color:#333;-webkit-text-stroke:0.2px #333"><span style="display:inline-block;width:3.9px;text-align:center">0</span><span style="display:inline-block;width:3.9px;text-align:center">0</span></div>
<div class="t" style="left:150.28px;top:306.54px;font:normal 7.4px/7.4px 'Liberation Serif',serif;color:#333;-webkit-text-stroke:0.2px #333"><span style="display:inline-block;width:3.9px;text-align:center">0</span><span style="display:inline-block;width:3.9px;text-align:center">0</span></div>
<div class="t" style="left:162.10px;top:306.54px;font:normal 7.4px/7.4px 'Liberation Serif',serif;color:#333;-webkit-text-stroke:0.2px #333"><span style="display:inline-block;width:3.9px;text-align:center">0</span><span style="display:inline-block;width:3.9px;text-align:center">0</span></div>
<div class="t" style="left:173.92px;top:306.54px;font:normal 7.4px/7.4px 'Liberation Serif',serif;color:#333;-webkit-text-stroke:0.2px #333"><span style="display:inline-block;width:3.9px;text-align:center">0</span><span style="display:inline-block;width:3.9px;text-align:center">0</span></div>
<div class="t" style="left:185.74px;top:306.54px;font:normal 7.4px/7.4px 'Liberation Serif',serif;color:#333;-webkit-text-stroke:0.2px #333"><span style="display:inline-block;width:3.9px;text-align:center">0</span><span style="display:inline-block;width:3.9px;text-align:center">0</span></div>
<div class="t" style="left:197.56px;top:306.54px;font:normal 7.4px/7.4px 'Liberation Serif',serif;color:#333;-webkit-text-stroke:0.2px #333"><span style="display:inline-block;width:3.9px;text-align:center">0</span><span style="display:inline-block;width:3.9px;text-align:center">0</span></div>
<div class="t" style="left:209.38px;top:306.54px;font:normal 7.4px/7.4px 'Liberation Serif',serif;color:#333;-webkit-text-stroke:0.2px #333"><span style="display:inline-block;width:3.9px;text-align:center">0</span><span style="display:inline-block;width:3.9px;text-align:center">0</span></div>
<div class="t" style="left:221.20px;top:306.54px;font:normal 7.4px/7.4px 'Liberation Serif',serif;color:#333;-webkit-text-stroke:0.2px #333"><span style="display:inline-block;width:3.9px;text-align:center">0</span><span style="display:inline-block;width:3.9px;text-align:center">0</span></div>
<div class="t" style="left:233.02px;top:306.54px;font:normal 7.4px/7.4px 'Liberation Serif',serif;color:#333;-webkit-text-stroke:0.2px #333"><span style="display:inline-block;width:3.9px;text-align:center">0</span><span style="display:inline-block;width:3.9px;text-align:center">0</span></div>
<div class="t" style="left:244.84px;top:306.54px;font:normal 7.4px/7.4px 'Liberation Serif',serif;color:#333;-webkit-text-stroke:0.2px #333"><span style="display:inline-block;width:3.9px;text-align:center">0</span><span style="display:inline-block;width:3.9px;text-align:center">0</span></div>
<div class="t" style="left:256.66px;top:306.54px;font:normal 7.4px/7.4px 'Liberation Serif',serif;color:#333;-webkit-text-stroke:0.2px #333"><span style="display:inline-block;width:3.9px;text-align:center">0</span><span style="display:inline-block;width:3.9px;text-align:center">0</span></div>
<div class="t" style="left:272.20px;top:306.54px;font:normal 7.4px/7.4px 'Liberation Serif',serif;color:#333;-webkit-text-stroke:0.2px #333"><span style="display:inline-block;width:3.95px;text-align:center">.</span><span style="display:inline-block;width:3.95px;text-align:center">.</span><span style="display:inline-block;width:3.95px;text-align:center">.</span><span style="display:inline-block;width:3.95px;text-align:center">.</span><span style="display:inline-block;width:3.95px;text-align:center">.</span><span style="display:inline-block;width:3.95px;text-align:center">.</span><span style="display:inline-block;width:3.95px;text-align:center">.</span><span style="display:inline-block;width:3.95px;text-align:center">.</span><span style="display:inline-block;width:3.95px;text-align:center">.</span><span style="display:inline-block;width:3.95px;text-align:center">.</span><span style="display:inline-block;width:3.95px;text-align:center">.</span><span style="display:inline-block;width:3.95px;text-align:center">.</span><span style="display:inline-block;width:3.95px;text-align:center">.</span><span style="display:inline-block;width:3.95px;text-align:center">.</span><span style="display:inline-block;width:3.95px;text-align:center">.</span><span style="display:inline-block;width:3.95px;text-align:center">.</span><span style="display:inline-block;width:3.95px;text-align:center">.</span><span style="display:inline-block;width:3.95px;text-align:center">.</span><span style="display:inline-block;width:3.95px;text-align:center">.</span></div>
<div class="t" style="left:5.00px;top:313.90px;font:normal 7.4px/7.4px 'Liberation Serif',serif;color:#333;-webkit-text-stroke:0.2px #333"><span style="display:inline-block;width:3.9px;text-align:center">0</span><span style="display:inline-block;width:3.9px;text-align:center">0</span><span style="display:inline-block;width:3.9px;text-align:center">0</span><span style="display:inline-block;width:3.9px;text-align:center">0</span><span style="display:inline-block;width:3.9px;text-align:center">0</span><span style="display:inline-block;width:3.9px;text-align:center">0</span><span style="display:inline-block;width:3.9px;text-align:center">5</span><span style="display:inline-block;width:3.9px;text-align:center;transform:scaleX(0.74)">F</span></div>
<div class="t" style="left:43.90px;top:313.90px;font:normal 7.4px/7.4px 'Liberation Serif',serif;color:#333;-webkit-text-stroke:0.2px #333"><span style="display:inline-block;width:3.9px;text-align:center">0</span><span style="display:inline-block;width:3.9px;text-align:center">0</span></div>
<div class="t" style="left:55.72px;top:313.90px;font:normal 7.4px/7.4px 'Liberation Serif',serif;color:#333;-webkit-text-stroke:0.2px #333"><span style="display:inline-block;width:3.9px;text-align:center">0</span><span style="display:inline-block;width:3.9px;text-align:center">0</span></div>
<div class="t" style="left:67.54px;top:313.90px;font:normal 7.4px/7.4px 'Liberation Serif',serif;color:#333;-webkit-text-stroke:0.2px #333"><span style="display:inline-block;width:3.9px;text-align:center">0</span><span style="display:inline-block;width:3.9px;text-align:center">0</span></div>
<div class="t" style="left:79.36px;top:313.90px;font:normal 7.4px/7.4px 'Liberation Serif',serif;color:#333;-webkit-text-stroke:0.2px #333"><span style="display:inline-block;width:3.9px;text-align:center">0</span><span style="display:inline-block;width:3.9px;text-align:center">0</span></div>
<div class="t" style="left:91.18px;top:313.90px;font:normal 7.4px/7.4px 'Liberation Serif',serif;color:#333;-webkit-text-stroke:0.2px #333"><span style="display:inline-block;width:3.9px;text-align:center">0</span><span style="display:inline-block;width:3.9px;text-align:center">0</span></div>
<div class="t" style="left:103.00px;top:313.90px;font:normal 7.4px/7.4px 'Liberation Serif',serif;color:#333;-webkit-text-stroke:0.2px #333"><span style="display:inline-block;width:3.9px;text-align:center">0</span><span style="display:inline-block;width:3.9px;text-align:center">0</span></div>
<div class="t" style="left:114.82px;top:313.90px;font:normal 7.4px/7.4px 'Liberation Serif',serif;color:#333;-webkit-text-stroke:0.2px #333"><span style="display:inline-block;width:3.9px;text-align:center">0</span><span style="display:inline-block;width:3.9px;text-align:center">0</span></div>
<div class="t" style="left:126.64px;top:313.90px;font:normal 7.4px/7.4px 'Liberation Serif',serif;color:#333;-webkit-text-stroke:0.2px #333"><span style="display:inline-block;width:3.9px;text-align:center">0</span><span style="display:inline-block;width:3.9px;text-align:center">0</span></div>
<div class="t" style="left:138.46px;top:313.90px;font:normal 7.4px/7.4px 'Liberation Serif',serif;color:#333;-webkit-text-stroke:0.2px #333"><span style="display:inline-block;width:3.9px;text-align:center">0</span><span style="display:inline-block;width:3.9px;text-align:center">0</span></div>
<div class="t" style="left:150.28px;top:313.90px;font:normal 7.4px/7.4px 'Liberation Serif',serif;color:#333;-webkit-text-stroke:0.2px #333"><span style="display:inline-block;width:3.9px;text-align:center">0</span><span style="display:inline-block;width:3.9px;text-align:center">0</span></div>
<div class="t" style="left:162.10px;top:313.90px;font:normal 7.4px/7.4px 'Liberation Serif',serif;color:#333;-webkit-text-stroke:0.2px #333"><span style="display:inline-block;width:3.9px;text-align:center">0</span><span style="display:inline-block;width:3.9px;text-align:center">0</span></div>
<div class="t" style="left:173.92px;top:313.90px;font:normal 7.4px/7.4px 'Liberation Serif',serif;color:#333;-webkit-text-stroke:0.2px #333"><span style="display:inline-block;width:3.9px;text-align:center">0</span><span style="display:inline-block;width:3.9px;text-align:center">0</span></div>
<div class="t" style="left:185.74px;top:313.90px;font:normal 7.4px/7.4px 'Liberation Serif',serif;color:#333;-webkit-text-stroke:0.2px #333"><span style="display:inline-block;width:3.9px;text-align:center">0</span><span style="display:inline-block;width:3.9px;text-align:center">0</span></div>
<div class="t" style="left:197.56px;top:313.90px;font:normal 7.4px/7.4px 'Liberation Serif',serif;color:#333;-webkit-text-stroke:0.2px #333"><span style="display:inline-block;width:3.9px;text-align:center">0</span><span style="display:inline-block;width:3.9px;text-align:center">0</span></div>
<div class="t" style="left:209.38px;top:313.90px;font:normal 7.4px/7.4px 'Liberation Serif',serif;color:#333;-webkit-text-stroke:0.2px #333"><span style="display:inline-block;width:3.9px;text-align:center">0</span><span style="display:inline-block;width:3.9px;text-align:center">0</span></div>
<div class="t" style="left:221.20px;top:313.90px;font:normal 7.4px/7.4px 'Liberation Serif',serif;color:#333;-webkit-text-stroke:0.2px #333"><span style="display:inline-block;width:3.9px;text-align:center">0</span><span style="display:inline-block;width:3.9px;text-align:center">0</span></div>
<div class="t" style="left:233.02px;top:313.90px;font:normal 7.4px/7.4px 'Liberation Serif',serif;color:#333;-webkit-text-stroke:0.2px #333"><span style="display:inline-block;width:3.9px;text-align:center">0</span><span style="display:inline-block;width:3.9px;text-align:center">0</span></div>
<div class="t" style="left:244.84px;top:313.90px;font:normal 7.4px/7.4px 'Liberation Serif',serif;color:#333;-webkit-text-stroke:0.2px #333"><span style="display:inline-block;width:3.9px;text-align:center">0</span><span style="display:inline-block;width:3.9px;text-align:center">0</span></div>
<div class="t" style="left:256.66px;top:313.90px;font:normal 7.4px/7.4px 'Liberation Serif',serif;color:#333;-webkit-text-stroke:0.2px #333"><span style="display:inline-block;width:3.9px;text-align:center">0</span><span style="display:inline-block;width:3.9px;text-align:center">0</span></div>
<div class="t" style="left:272.20px;top:313.90px;font:normal 7.4px/7.4px 'Liberation Serif',serif;color:#333;-webkit-text-stroke:0.2px #333"><span style="display:inline-block;width:3.95px;text-align:center">.</span><span style="display:inline-block;width:3.95px;text-align:center">.</span><span style="display:inline-block;width:3.95px;text-align:center">.</span><span style="display:inline-block;width:3.95px;text-align:center">.</span><span style="display:inline-block;width:3.95px;text-align:center">.</span><span style="display:inline-block;width:3.95px;text-align:center">.</span><span style="display:inline-block;width:3.95px;text-align:center">.</span><span style="display:inline-block;width:3.95px;text-align:center">.</span><span style="display:inline-block;width:3.95px;text-align:center">.</span><span style="display:inline-block;width:3.95px;text-align:center">.</span><span style="display:inline-block;width:3.95px;text-align:center">.</span><span style="display:inline-block;width:3.95px;text-align:center">.</span><span style="display:inline-block;width:3.95px;text-align:center">.</span><span style="display:inline-block;width:3.95px;text-align:center">.</span><span style="display:inline-block;width:3.95px;text-align:center">.</span><span style="display:inline-block;width:3.95px;text-align:center">.</span><span style="display:inline-block;width:3.95px;text-align:center">.</span><span style="display:inline-block;width:3.95px;text-align:center">.</span><span style="display:inline-block;width:3.95px;text-align:center">.</span></div>
<div class="t" style="left:5.00px;top:321.26px;font:normal 7.4px/7.4px 'Liberation Serif',serif;color:#333;-webkit-text-stroke:0.2px #333"><span style="display:inline-block;width:3.9px;text-align:center">0</span><span style="display:inline-block;width:3.9px;text-align:center">0</span><span style="display:inline-block;width:3.9px;text-align:center">0</span><span style="display:inline-block;width:3.9px;text-align:center">0</span><span style="display:inline-block;width:3.9px;text-align:center">0</span><span style="display:inline-block;width:3.9px;text-align:center">0</span><span style="display:inline-block;width:3.9px;text-align:center">7</span><span style="display:inline-block;width:3.9px;text-align:center">2</span></div>
<div class="t" style="left:43.90px;top:321.26px;font:normal 7.4px/7.4px 'Liberation Serif',serif;color:#333;-webkit-text-stroke:0.2px #333"><span style="display:inline-block;width:3.9px;text-align:center">0</span><span style="display:inline-block;width:3.9px;text-align:center">0</span></div>
<div class="t" style="left:55.72px;top:321.26px;font:normal 7.4px/7.4px 'Liberation Serif',serif;color:#333;-webkit-text-stroke:0.2px #333"><span style="display:inline-block;width:3.9px;text-align:center">0</span><span style="display:inline-block;width:3.9px;text-align:center">0</span></div>
<div class="t" style="left:67.54px;top:321.26px;font:normal 7.4px/7.4px 'Liberation Serif',serif;color:#333;-webkit-text-stroke:0.2px #333"><span style="display:inline-block;width:3.9px;text-align:center">0</span><span style="display:inline-block;width:3.9px;text-align:center">0</span></div>
<div class="t" style="left:79.36px;top:321.26px;font:normal 7.4px/7.4px 'Liberation Serif',serif;color:#333;-webkit-text-stroke:0.2px #333"><span style="display:inline-block;width:3.9px;text-align:center">0</span><span style="display:inline-block;width:3.9px;text-align:center">0</span></div>
<div class="t" style="left:272.20px;top:321.26px;font:normal 7.4px/7.4px 'Liberation Serif',serif;color:#333;-webkit-text-stroke:0.2px #333"><span style="display:inline-block;width:3.95px;text-align:center">.</span><span style="display:inline-block;width:3.95px;text-align:center">.</span><span style="display:inline-block;width:3.95px;text-align:center">.</span><span style="display:inline-block;width:3.95px;text-align:center">.</span></div>
<div class="a" style="left:272px;top:277px;width:24px;height:7px;background:transparent;border:0.8px solid #555"></div>
<div class="a" style="left:356.2px;top:105px;width:4.6px;height:417px;background:#efefef;"></div>
<div class="a" style="left:356.2px;top:251px;width:4.4px;height:124px;background:#dff0f2;border-left:1px solid #8c959c;border-right:1px solid #a4abb0;border-top:1px solid #7a848c;border-radius:1px 1px 0 0"></div>
<svg class="a" style="left:357px;top:310px" width="3" height="5" viewBox="0 0 3 5"><path d="M2.4 0.5 L0.7 2.5 L2.4 4.5" stroke="#333" stroke-width="0.8" fill="none"/></svg>
<div class="a" style="left:361px;top:105px;width:706px;height:407px;background:#fff;"></div>
<div class="a" style="left:445.4px;top:105px;width:0.8px;height:10px;background:#ededed;"></div>
<div class="a" style="left:473.2px;top:105px;width:0.8px;height:10px;background:#ededed;"></div>
<div class="a" style="left:501.4px;top:105px;width:0.8px;height:10px;background:#ededed;"></div>
<div class="a" style="left:529.6px;top:105px;width:0.8px;height:10px;background:#ededed;"></div>
<div class="a" style="left:557.6px;top:105px;width:0.8px;height:10px;background:#ededed;"></div>
<div class="a" style="left:588.2px;top:105px;width:0.8px;height:10px;background:#ededed;"></div>
<div class="a" style="left:672.6px;top:105px;width:0.8px;height:10px;background:#ededed;"></div>
<div class="a" style="left:756.7px;top:105px;width:0.8px;height:10px;background:#ededed;"></div>
<div class="a" style="left:816.8px;top:105px;width:0.8px;height:10px;background:#ededed;"></div>
<div class="a" style="left:881.4px;top:105px;width:0.8px;height:10px;background:#ededed;"></div>
<div class="a" style="left:941px;top:105px;width:0.8px;height:10px;background:#ededed;"></div>
<div class="a" style="left:1010px;top:105px;width:0.8px;height:10px;background:#ededed;"></div>
<div class="t m" style="left:375.30px;top:108.25px;font:normal 7.5px/7.5px 'Liberation Mono',monospace;color:#333;">Absolute Time</div>
<div class="t m" style="left:451.70px;top:108.25px;font:normal 7.5px/7.5px 'Liberation Mono',monospace;color:#333;">Chn</div>
<div class="t m" style="left:477.80px;top:108.25px;font:normal 7.5px/7.5px 'Liberation Mono',monospace;color:#333;">Port</div>
<div class="t m" style="left:505.80px;top:108.25px;font:normal 7.5px/7.5px 'Liberation Mono',monospace;color:#333;">VLAN</div>
<div class="t m" style="left:536.40px;top:108.25px;font:normal 7.5px/7.5px 'Liberation Mono',monospace;color:#333;">Sim</div>
<div class="t m" style="left:565.60px;top:108.25px;font:normal 7.5px/7.5px 'Liberation Mono',monospace;color:#333;">Dir</div>
<div class="t m" style="left:607.60px;top:108.25px;font:normal 7.5px/7.5px 'Liberation Mono',monospace;color:#333;">Source MAC</div>
<div class="t m" style="left:680.70px;top:108.25px;font:normal 7.5px/7.5px 'Liberation Mono',monospace;color:#333;">Destination MAC</div>
<div class="t m" style="left:761.00px;top:108.25px;font:normal 7.5px/7.5px 'Liberation Mono',monospace;color:#333;">Source IP</div>
<div class="t m" style="left:820.30px;top:108.25px;font:normal 7.5px/7.5px 'Liberation Mono',monospace;color:#333;">Destinatio...</div>
<div class="t m" style="left:885.60px;top:108.25px;font:normal 7.5px/7.5px 'Liberation Mono',monospace;color:#333;">Source Port</div>
<div class="t m" style="left:943.00px;top:108.25px;font:normal 7.5px/7.5px 'Liberation Mono',monospace;color:#333;">Destination...</div>
<div class="t m" style="left:1024.40px;top:108.25px;font:normal 7.5px/7.5px 'Liberation Mono',monospace;color:#333;">Type</div>
<div class="t m" style="left:1060.00px;top:108.25px;font:normal 7.5px/7.5px 'Liberation Mono',monospace;color:#333;">Pa</div>
<svg class="a" style="left:365px;top:106.5px" width="8" height="8" viewBox="0 0 8 8"><circle cx="3.9" cy="3.9" r="3.7" fill="#4a8c62"/><path d="M3.8 1.8 V4.2 L5.6 5.2" stroke="#e0f4e8" stroke-width="1" fill="none"/></svg>
<svg class="a" style="left:366px;top:117.89999999999999px" width="6" height="4" viewBox="0 0 6 4"><path d="M1.2 1 L3 2.8 L4.8 1" stroke="#4a4a4a" stroke-width="1" fill="none"/></svg>
<svg class="a" style="left:374.5px;top:116.6px" width="9" height="8" viewBox="0 0 9 8"><rect x="0.5" y="0.4" width="8" height="6.8" fill="#22509a"/><path d="M2.4 1.2 H6.6 L4.5 2.8Z" fill="#e8f0fa"/></svg>
<div class="t m" style="left:387.50px;top:117.95px;font:normal 7.5px/7.5px 'Liberation Mono',monospace;color:#333;">18.776044</div>
<div class="t m" style="left:451.70px;top:117.95px;font:normal 7.5px/7.5px 'Liberation Mono',monospace;color:#333;">E...</div>
<div class="t m" style="left:479.40px;top:117.95px;font:normal 7.5px/7.5px 'Liberation Mono',monospace;color:#333;">S...</div>
<div class="t m" style="left:510.40px;top:117.95px;font:normal 7.5px/7.5px 'Liberation Mono',monospace;color:#333;">0CC</div>
<div class="t m" style="left:570.80px;top:117.95px;font:normal 7.5px/7.5px 'Liberation Mono',monospace;color:#333;">Tx</div>
<div class="t m" style="left:594.90px;top:117.95px;font:normal 7.5px/7.5px 'Liberation Mono',monospace;color:#333;">FF:FE:FD:FC:F...</div>
<div class="t m" style="left:678.90px;top:117.95px;font:normal 7.5px/7.5px 'Liberation Mono',monospace;color:#333;">01:00:5E:07:C...</div>
<div class="t m" style="left:763.30px;top:117.95px;font:normal 7.5px/7.5px 'Liberation Mono',monospace;color:#333;">10.204.0.2</div>
<div class="t m" style="left:822.80px;top:117.95px;font:normal 7.5px/7.5px 'Liberation Mono',monospace;color:#333;">227.7.204.1</div>
<div class="t m" style="left:888.00px;top:117.95px;font:normal 7.5px/7.5px 'Liberation Mono',monospace;color:#333;">E300</div>
<div class="t m" style="left:945.50px;top:117.95px;font:normal 7.5px/7.5px 'Liberation Mono',monospace;color:#333;">E301</div>
<div class="t m" style="left:1028.40px;top:117.95px;font:normal 7.5px/7.5px 'Liberation Mono',monospace;color:#333;">UDP</div>
<div class="a" style="left:361px;top:125px;width:705.5px;height:10.4px;background:#cce4f7;"></div>
<svg class="a" style="left:376.3px;top:128.10000000000002px" width="6" height="4" viewBox="0 0 6 4"><path d="M1.2 1 L3 2.8 L4.8 1" stroke="#4a4a4a" stroke-width="1" fill="none"/></svg>
<svg class="a" style="left:384.5px;top:126.00000000000001px" width="9" height="9" viewBox="0 0 9 9"><circle cx="4.4" cy="4.4" r="3.8" fill="none" stroke="#4a6ab8" stroke-width="0.9"/><path d="M1.6 4.6 L3 4.6 L3.9 2.6 L5 6.4 L5.9 4.6 L7.2 4.6" stroke="#4a6ab8" stroke-width="0.8" fill="none"/></svg>
<div class="t m" style="left:397.50px;top:128.15px;font:normal 7.5px/7.5px 'Liberation Mono',monospace;color:#333;">18.776044 PDUTXDemo1_0</div>
<div class="t m" style="left:689.70px;top:128.15px;font:normal 7.5px/7.5px 'Liberation Mono',monospace;color:#333;">3020205</div>
<div class="a" style="left:388.3px;top:135.4px;width:0.8px;height:75.6px;background:#d8d8d8;"></div>
<div class="a" style="left:388.3px;top:140.4px;width:6px;height:0.8px;background:#d8d8d8;"></div>
<svg class="a" style="left:395px;top:136.9px" width="9" height="7" viewBox="0 0 9 7"><path d="M0.3 3.4 H1.8 L3 0.6 L4.5 6.2 L5.8 2 L6.6 3.4 H8.6" stroke="#2a5590" stroke-width="1.3" fill="none" stroke-linejoin="round"/></svg>
<div class="t m" style="left:407.90px;top:138.25px;font:normal 7.5px/7.5px 'Liberation Mono',monospace;color:#333;">SignalDemo1_0_0</div>
<div class="t m" style="left:695.50px;top:138.25px;font:normal 7.5px/7.5px 'Liberation Mono',monospace;color:#333;">0</div>
<div class="t m" style="left:983.70px;top:138.25px;font:normal 7.5px/7.5px 'Liberation Mono',monospace;color:#333;">0</div>
<div class="a" style="left:388.3px;top:150.45000000000002px;width:6px;height:0.8px;background:#d8d8d8;"></div>
<svg class="a" style="left:395px;top:146.95000000000002px" width="9" height="7" viewBox="0 0 9 7"><path d="M0.3 3.4 H1.8 L3 0.6 L4.5 6.2 L5.8 2 L6.6 3.4 H8.6" stroke="#2a5590" stroke-width="1.3" fill="none" stroke-linejoin="round"/></svg>
<div class="t m" style="left:407.90px;top:148.30px;font:normal 7.5px/7.5px 'Liberation Mono',monospace;color:#333;">SignalDemo1_0_0_UB</div>
<div class="t m" style="left:695.50px;top:148.30px;font:normal 7.5px/7.5px 'Liberation Mono',monospace;color:#333;">0</div>
<div class="t m" style="left:983.70px;top:148.30px;font:normal 7.5px/7.5px 'Liberation Mono',monospace;color:#333;">0</div>
<div class="a" style="left:388.3px;top:160.5px;width:6px;height:0.8px;background:#d8d8d8;"></div>
<svg class="a" style="left:395px;top:157.0px" width="9" height="7" viewBox="0 0 9 7"><path d="M0.3 3.4 H1.8 L3 0.6 L4.5 6.2 L5.8 2 L6.6 3.4 H8.6" stroke="#2a5590" stroke-width="1.3" fill="none" stroke-linejoin="round"/></svg>
<div class="t m" style="left:407.90px;top:158.35px;font:normal 7.5px/7.5px 'Liberation Mono',monospace;color:#333;">SignalDemo1_0_1</div>
<div class="t m" style="left:695.50px;top:158.35px;font:normal 7.5px/7.5px 'Liberation Mono',monospace;color:#333;">0</div>
<div class="t m" style="left:983.70px;top:158.35px;font:normal 7.5px/7.5px 'Liberation Mono',monospace;color:#333;">0</div>
<div class="a" style="left:388.3px;top:170.55px;width:6px;height:0.8px;background:#d8d8d8;"></div>
<svg class="a" style="left:395px;top:167.05px" width="9" height="7" viewBox="0 0 9 7"><path d="M0.3 3.4 H1.8 L3 0.6 L4.5 6.2 L5.8 2 L6.6 3.4 H8.6" stroke="#2a5590" stroke-width="1.3" fill="none" stroke-linejoin="round"/></svg>
<div class="t m" style="left:407.90px;top:168.40px;font:normal 7.5px/7.5px 'Liberation Mono',monospace;color:#333;">SignalDemo1_0_1_UB</div>
<div class="t m" style="left:695.50px;top:168.40px;font:normal 7.5px/7.5px 'Liberation Mono',monospace;color:#333;">0</div>
<div class="t m" style="left:983.70px;top:168.40px;font:normal 7.5px/7.5px 'Liberation Mono',monospace;color:#333;">0</div>
<div class="a" style="left:388.3px;top:180.60000000000002px;width:6px;height:0.8px;background:#d8d8d8;"></div>
<svg class="a" style="left:395px;top:177.10000000000002px" width="9" height="7" viewBox="0 0 9 7"><path d="M0.3 3.4 H1.8 L3 0.6 L4.5 6.2 L5.8 2 L6.6 3.4 H8.6" stroke="#2a5590" stroke-width="1.3" fill="none" stroke-linejoin="round"/></svg>
<div class="t m" style="left:407.90px;top:178.45px;font:normal 7.5px/7.5px 'Liberation Mono',monospace;color:#333;">SignalDemo1_0_2</div>
<div class="t m" style="left:695.50px;top:178.45px;font:normal 7.5px/7.5px 'Liberation Mono',monospace;color:#333;">0</div>
<div class="t m" style="left:983.70px;top:178.45px;font:normal 7.5px/7.5px 'Liberation Mono',monospace;color:#333;">0</div>
<div class="a" style="left:388.3px;top:190.65px;width:6px;height:0.8px;background:#d8d8d8;"></div>
<svg class="a" style="left:395px;top:187.15px" width="9" height="7" viewBox="0 0 9 7"><path d="M0.3 3.4 H1.8 L3 0.6 L4.5 6.2 L5.8 2 L6.6 3.4 H8.6" stroke="#2a5590" stroke-width="1.3" fill="none" stroke-linejoin="round"/></svg>
<div class="t m" style="left:407.90px;top:188.50px;font:normal 7.5px/7.5px 'Liberation Mono',monospace;color:#333;">SignalDemo1_0_2_UB</div>
<div class="t m" style="left:695.50px;top:188.50px;font:normal 7.5px/7.5px 'Liberation Mono',monospace;color:#333;">0</div>
<div class="t m" style="left:983.70px;top:188.50px;font:normal 7.5px/7.5px 'Liberation Mono',monospace;color:#333;">0</div>
<div class="a" style="left:388.3px;top:200.70000000000002px;width:6px;height:0.8px;background:#d8d8d8;"></div>
<svg class="a" style="left:395px;top:197.20000000000002px" width="9" height="7" viewBox="0 0 9 7"><path d="M0.3 3.4 H1.8 L3 0.6 L4.5 6.2 L5.8 2 L6.6 3.4 H8.6" stroke="#2a5590" stroke-width="1.3" fill="none" stroke-linejoin="round"/></svg>
<div class="t m" style="left:407.90px;top:198.55px;font:normal 7.5px/7.5px 'Liberation Mono',monospace;color:#333;">SignalDemo1_0_3</div>
<div class="t m" style="left:695.50px;top:198.55px;font:normal 7.5px/7.5px 'Liberation Mono',monospace;color:#333;">0</div>
<div class="t m" style="left:983.70px;top:198.55px;font:normal 7.5px/7.5px 'Liberation Mono',monospace;color:#333;">0</div>
<div class="a" style="left:388.3px;top:210.75px;width:6px;height:0.8px;background:#d8d8d8;"></div>
<svg class="a" style="left:395px;top:207.25px" width="9" height="7" viewBox="0 0 9 7"><path d="M0.3 3.4 H1.8 L3 0.6 L4.5 6.2 L5.8 2 L6.6 3.4 H8.6" stroke="#2a5590" stroke-width="1.3" fill="none" stroke-linejoin="round"/></svg>
<div class="t m" style="left:407.90px;top:208.60px;font:normal 7.5px/7.5px 'Liberation Mono',monospace;color:#333;">SignalDemo1_0_3_UB</div>
<div class="t m" style="left:695.50px;top:208.60px;font:normal 7.5px/7.5px 'Liberation Mono',monospace;color:#333;">0</div>
<div class="t m" style="left:983.70px;top:208.60px;font:normal 7.5px/7.5px 'Liberation Mono',monospace;color:#333;">0</div>
<div class="a" style="left:361px;top:512px;width:706px;height:10px;background:#f0f0f0;"></div>
<div class="a" style="left:371px;top:512.2px;width:559px;height:8.4px;background:#cacaca;"></div>
<svg class="a" style="left:363.5px;top:514px" width="4" height="6" viewBox="0 0 4 6"><path d="M3 0.7 L1 3 L3 5.3" stroke="#444" stroke-width="0.9" fill="none"/></svg>
<svg class="a" style="left:1059.5px;top:514px" width="4" height="6" viewBox="0 0 4 6"><path d="M1 0.7 L3 3 L1 5.3" stroke="#444" stroke-width="0.9" fill="none"/></svg>
<div class="a" style="left:1068px;top:92px;width:9px;height:24px;background:#fdfdfd;"></div>
<svg class="a" style="left:1068.5px;top:82px" width="3" height="6" viewBox="0 0 3 6"><path d="M2.6 0.6 L0.4 3 L2.6 5.4" stroke="#444" stroke-width="0.9" fill="none"/></svg>
<svg class="a" style="left:1070.5px;top:97px" width="4" height="3" viewBox="0 0 4 3"><path d="M0 0 H3.5 L1.75 2.2Z" fill="#444"/></svg>
<div class="a" style="left:1068px;top:116px;width:8px;height:406px;background:#ececec;"></div>
<div class="a" style="left:1068px;top:213.6px;width:7.5px;height:297.4px;background:#cdcdcd;"></div>
<svg class="a" style="left:1068.5px;top:119px" width="6" height="4" viewBox="0 0 6 4"><path d="M0.7 3.3 L3 0.9 L5.3 3.3" stroke="#444" stroke-width="0.9" fill="none"/></svg>
<svg class="a" style="left:1068.5px;top:514.5px" width="6" height="4" viewBox="0 0 6 4"><path d="M0.7 0.9 L3 3.3 L5.3 0.9" stroke="#444" stroke-width="0.9" fill="none"/></svg>
<div class="a" style="left:88.1px;top:89.2px;width:17.9px;height:17.4px;background:#d8e8f5;border:1.7px solid #bc5862;border-radius:1.5px"></div>
<svg class="a" style="left:92px;top:95px" width="10" height="9" viewBox="0 0 10 9"><rect x="1" y="1" width="7.6" height="1.5" fill="#2a4a80"/><rect x="1" y="1" width="1.4" height="6.8" fill="#2a4a80"/><rect x="1" y="3.6" width="4.6" height="1.1" fill="#2a4a80"/><rect x="1" y="5.6" width="4" height="1.1" fill="#2a4a80"/><rect x="1" y="6.9" width="5" height="1" fill="#2a4a80"/><rect x="7.4" y="1" width="1.2" height="3" fill="#2a4a80"/><circle cx="7.6" cy="6.4" r="1.6" fill="none" stroke="#4a9060" stroke-width="1"/></svg>
<div class="a" style="left:2px;top:522px;width:1065px;height:10.4px;background:#ebe9e9;"></div>
<div class="a" style="left:2px;top:522px;width:1058px;height:0.7px;background:#d0d0d0;"></div>
<div class="a" style="left:3px;top:522.5px;width:89.6px;height:9.5px;background:#f0eeee;border-right:1px solid #d4d4d4"></div>
<div class="a" style="left:95.4px;top:522.5px;width:89.8px;height:9.5px;background:#f0eeee;border-right:1px solid #d4d4d4;border-left:1px solid #d4d4d4"></div>
<div class="t s" style="left:4.00px;top:525.24px;font:normal 6.8px/6.8px 'Liberation Sans',sans-serif;color:#333;transform:scaleX(0.86);transform-origin:0 0">In list</div>
<div class="t s" style="left:96.30px;top:525.24px;font:normal 6.8px/6.8px 'Liberation Sans',sans-serif;color:#333;transform:scaleX(0.85);transform-origin:0 0">All Messages</div>
<div class="t s" style="left:616.80px;top:526.15px;font:bold 6.2px/6.2px 'Liberation Sans',sans-serif;color:#333;">0 %</div>
<div class="a" style="left:1058.9px;top:522px;width:0.8px;height:10px;background:#d8d8d8;"></div>
<svg class="a" style="left:1060px;top:524px" width="7" height="8" viewBox="0 0 7 8"><path d="M6.5 1 L1 7.5 M6.5 4.5 L4 7.5" stroke="#bbb" stroke-width="0.7"/></svg>
<div class="a" style="left:2px;top:76px;width:1px;height:457px;background:#55636f;"></div>
<div class="a" style="left:2px;top:532px;width:1066px;height:1px;background:#7d8ea4;"></div>
<div class="a" style="left:1067.3px;top:76px;width:1px;height:457px;background:#55636f;"></div>
<div class="a" style="left:0px;top:533px;width:1080px;height:12px;background:linear-gradient(#e4eaf0,#dde3e8 70%,#f4f6f7);"></div>
<div class="a" style="left:540.4px;top:532.6px;width:537px;height:10.4px;background:#eeeeee;border-left:1px solid #727a82;border-bottom:1px solid #8c9298;box-shadow:inset 1px 1px 0 #fff"></div>
<div class="a" style="left:1.5px;top:533px;width:1px;height:10px;background:#8a96a2;"></div>
<svg class="a" style="left:1070px;top:535px" width="7" height="7" viewBox="0 0 7 7"><path d="M6.5 0.5 L0.5 6.5 M6.5 3.5 L3.5 6.5" stroke="#bbb" stroke-width="0.7"/></svg>
<div class="a" style="left:0px;top:543px;width:1080px;height:17.4px;background:#fbfbfb;"></div>
<div class="a" style="left:0px;top:546.3px;width:50px;height:13.4px;background:#ffffff;"></div>
<svg class="a" style="left:5.5px;top:550px" width="8" height="8" viewBox="0 0 8 8"><rect x="0.5" y="0.3" width="7" height="5" fill="#1f4f96"/><rect x="3" y="5.3" width="2" height="1.2" fill="#1f4f96"/><rect x="1.5" y="6.5" width="5" height="1" fill="#1f4f96"/></svg>
<div class="t s" style="left:16.70px;top:550.52px;font:normal 6.0px/6.0px 'Liberation Sans',sans-serif;color:#333;">Workspace</div>
<div class="a" style="left:50.8px;top:546.3px;width:16.7px;height:13.4px;background:#f0f0f0;"></div>
<svg class="a" style="left:55.5px;top:548.5px" width="9" height="9" viewBox="0 0 9 9"><path d="M4.2 0.5 V8 M0.5 4.2 H8" stroke="#1f8a48" stroke-width="2"/></svg>
<div class="a" style="left:0px;top:560.3px;width:1080px;height:8.7px;background:#ebebeb;"></div>
<div class="a" style="left:0px;top:560.3px;width:1080px;height:0.8px;background:#cfcfcf;"></div>
<div class="a" style="left:68.3px;top:561px;width:0.8px;height:8px;background:#c8c8c8;"></div>
<div class="a" style="left:138.3px;top:561px;width:0.8px;height:8px;background:#c8c8c8;"></div>
<div class="a" style="left:242.3px;top:561px;width:0.8px;height:8px;background:#c8c8c8;"></div>
<svg class="a" style="left:3px;top:562px" width="9" height="7" viewBox="0 0 9 7"><circle cx="5" cy="2.5" r="2" fill="none" stroke="#777" stroke-width="0.8"/><path d="M1 7 L4 4" stroke="#777" stroke-width="0.8"/><circle cx="2" cy="6.5" r="1.5" fill="#d03030"/></svg>
<div class="t s" style="left:19.70px;top:563.91px;font:normal 6.6px/6.6px 'Liberation Sans',sans-serif;color:#333;">Disconnected</div>
<svg class="a" style="left:71.5px;top:562px" width="8" height="7" viewBox="0 0 8 7"><circle cx="3.8" cy="3.8" r="3.6" fill="#3e8e5e"/><path d="M3.8 1.7 V4 H5.5" stroke="#fff" stroke-width="0.9" fill="none"/></svg>
<div class="t s" style="left:95.00px;top:564.17px;font:normal 6.3px/6.3px 'Liberation Sans',sans-serif;color:#333;">0:00:00:19</div>
<svg class="a" style="left:141.5px;top:561.5px" width="9" height="8" viewBox="0 0 9 8"><path d="M1 0.5 V8" stroke="#3a8a50" stroke-width="1"/><rect x="2" y="0.5" width="6" height="5" fill="#e8eef8" stroke="#8a9ab8" stroke-width="0.6"/></svg>
<div class="t s" style="left:177.50px;top:563.91px;font:normal 6.6px/6.6px 'Liberation Sans',sans-serif;color:#333;">Not logging</div>
<svg class="a" style="left:244.5px;top:562px" width="8" height="7" viewBox="0 0 8 7"><rect x="0.5" y="0.5" width="7" height="6.5" fill="#2a8a4a"/><rect x="4" y="0.5" width="3.5" height="3" fill="#e0f0e0"/></svg>
<div class="t s" style="left:255.00px;top:563.91px;font:normal 6.6px/6.6px 'Liberation Sans',sans-serif;color:#333;">13:04:37: Application disconnected</div>
<div class="a" style="left:1074.4px;top:520.4px;width:6px;height:33px;background:#3a4450;border-radius:2px 0 0 2px"></div>
<div class="a" style="left:1076.6px;top:544.3px;width:2.4px;height:5.5px;background:#4ab090;"></div>
<div class="a" style="left:1039.6px;top:559.6px;width:41px;height:10px;background:#fff;border:0.8px solid #999"></div>
<div class="t s" style="left:1043.30px;top:561.87px;font:normal 7px/7px 'Liberation Sans',sans-serif;color:#444;">3 个新通知</div>
</body></html>
